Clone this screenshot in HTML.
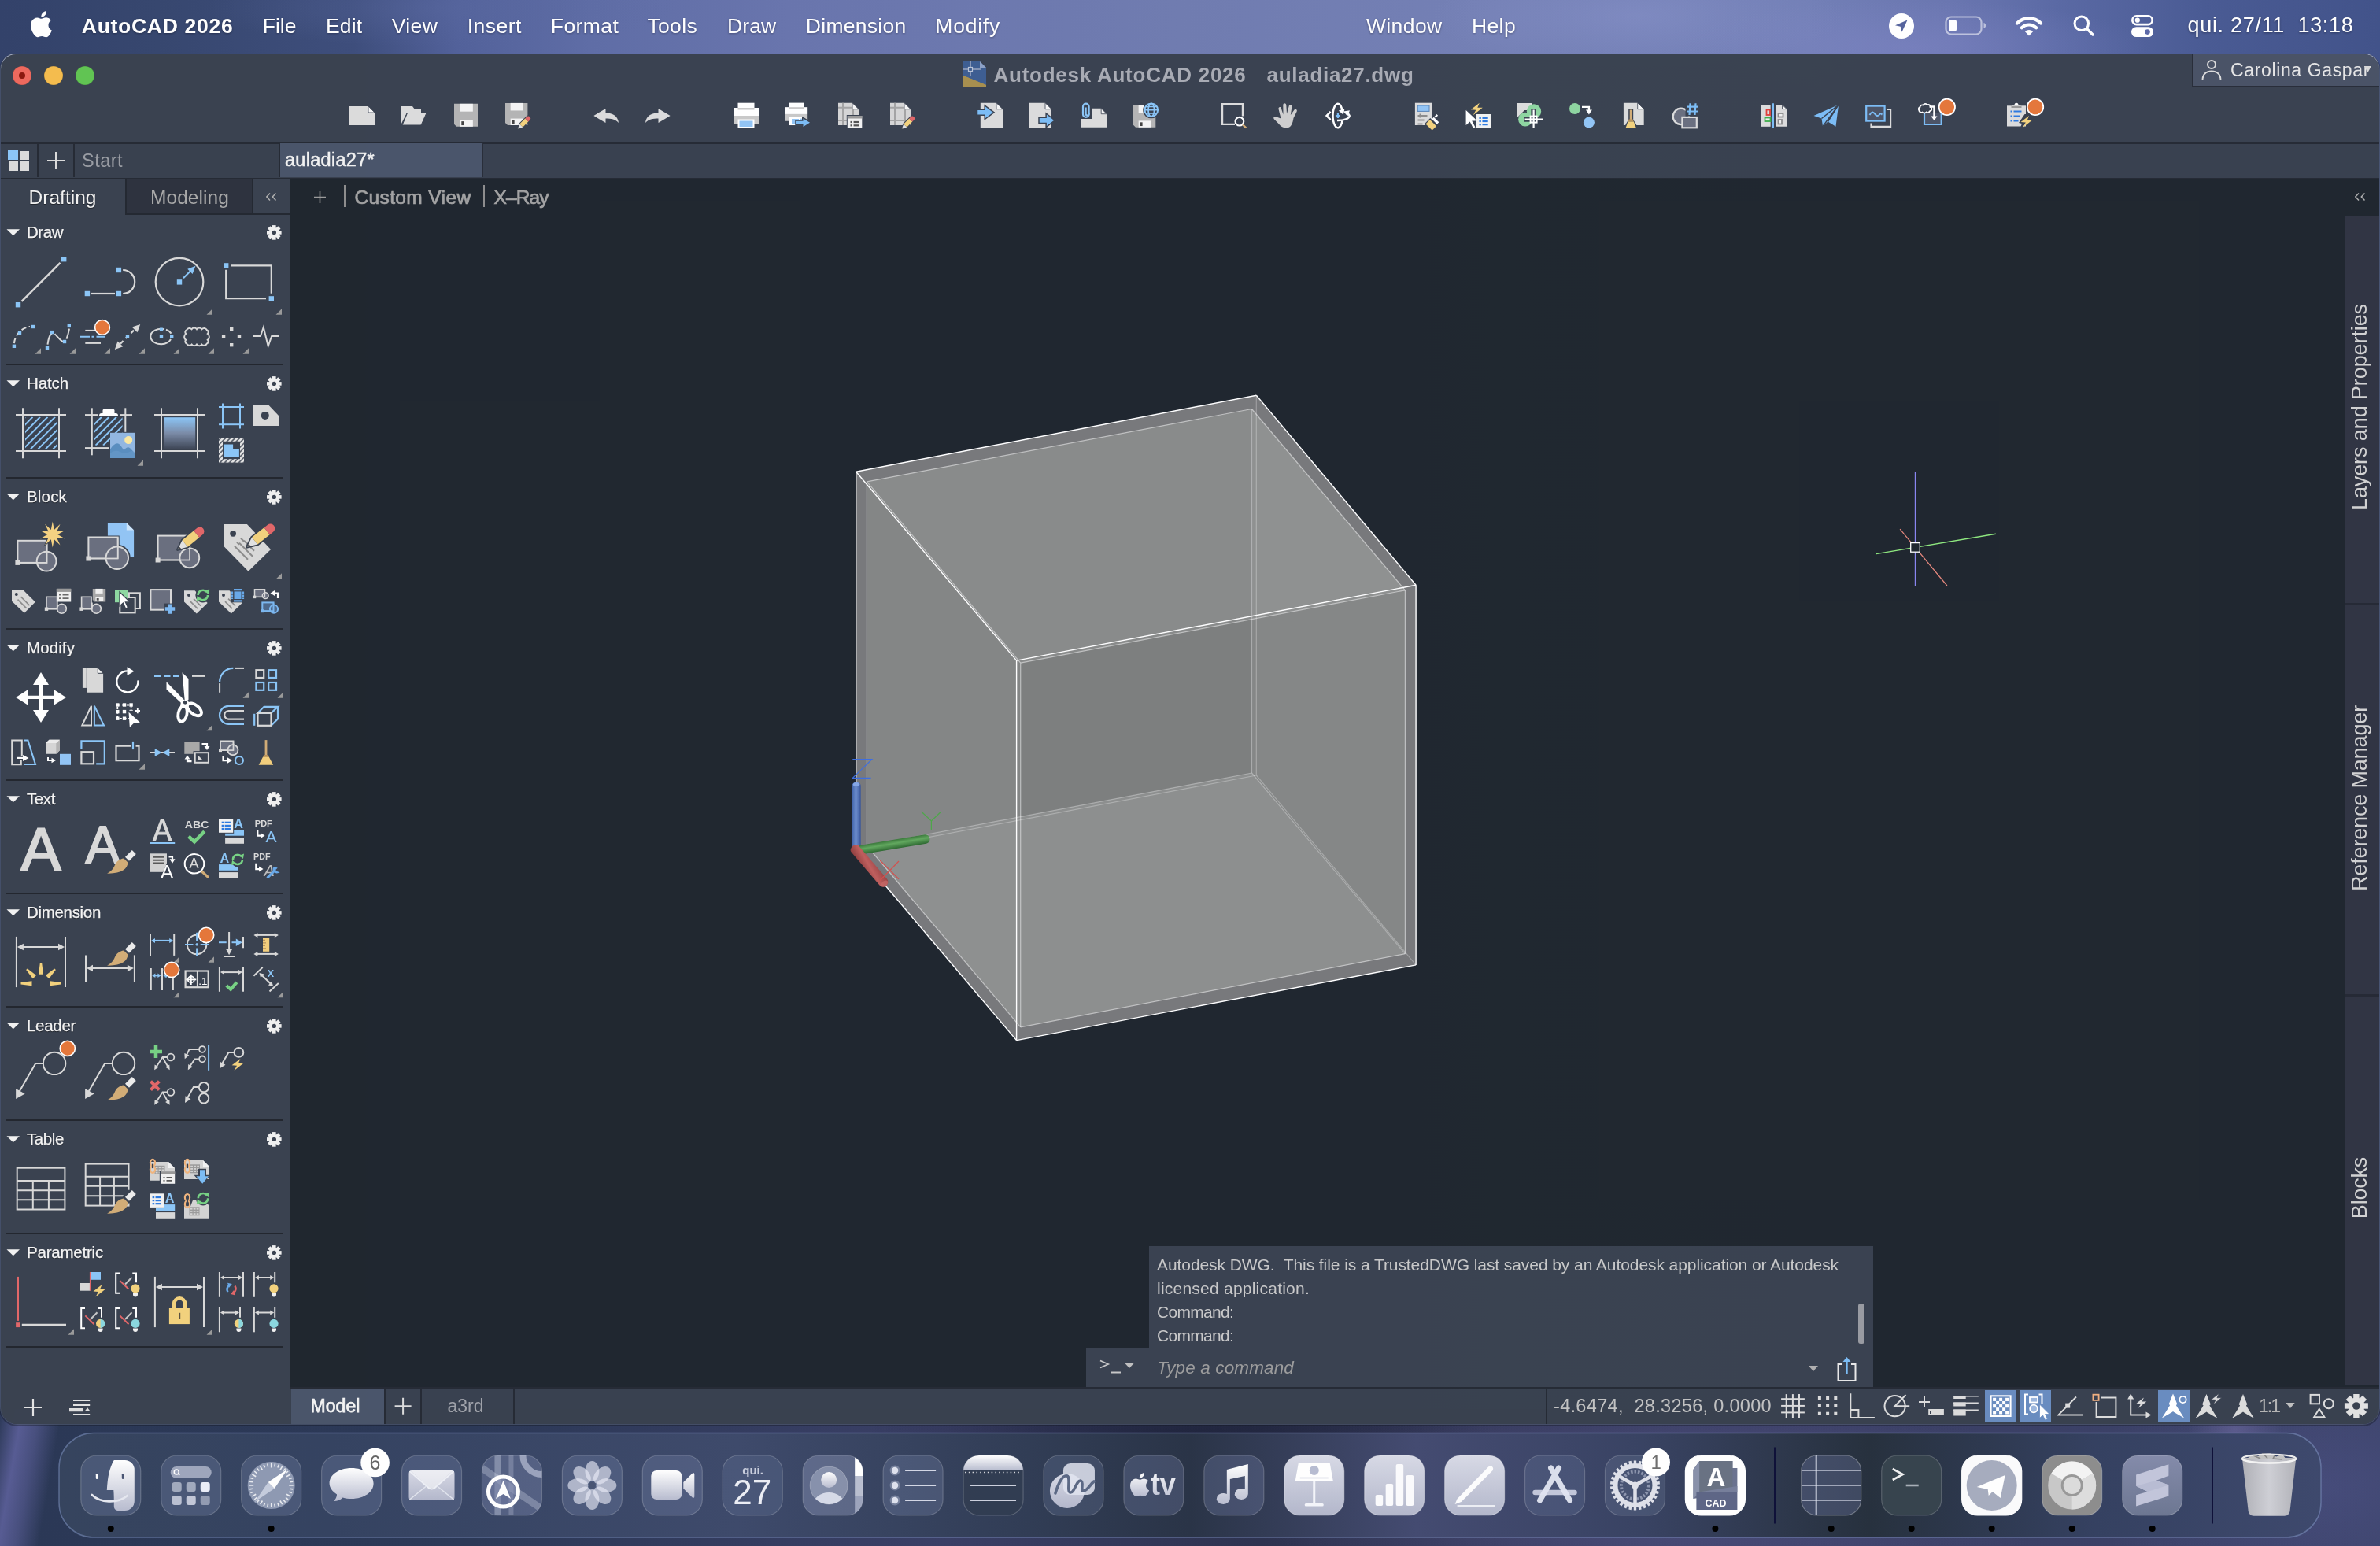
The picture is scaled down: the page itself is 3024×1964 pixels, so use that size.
<!DOCTYPE html>
<html><head><meta charset="utf-8"><title>AutoCAD 2026</title>
<style>
*{box-sizing:border-box;margin:0;padding:0}
html,body{width:3024px;height:1964px;overflow:hidden;background:#30385a;font-family:"Liberation Sans",sans-serif;}
.abs{position:absolute}
#wall{position:absolute;left:0;top:0;width:3024px;height:1964px;
 background:
  radial-gradient(ellipse 260px 70px at 2080px 20px, rgba(140,150,205,.45), rgba(140,150,205,0) 100%),
  radial-gradient(ellipse 300px 60px at 2430px 60px, rgba(130,135,200,.45), rgba(130,135,200,0) 100%),
  radial-gradient(ellipse 300px 50px at 560px 10px, rgba(90,105,160,.45), rgba(90,105,160,0) 100%),
  linear-gradient(90deg,#33426a 0px,#37476f 200px,#3e4e7c 450px,#52619a 580px,#5f6da6 750px,#6975ad 1000px,#707cb0 1500px,#7480b5 1900px,#727fb6 2300px,#6a76b0 2480px,#5a69a4 2620px,#4a5b94 2800px,#42538a 3024px);
}
#wallb{position:absolute;left:0;top:1790px;width:3024px;height:174px;
 background:
  linear-gradient(100deg, rgba(95,98,158,0) 0px, rgba(95,98,158,.85) 28px, rgba(95,98,158,.55) 50px, rgba(95,98,158,0) 78px),
  radial-gradient(ellipse 400px 120px at 1500px 40px, rgba(20,25,45,.6), rgba(20,25,45,0) 100%),
  radial-gradient(ellipse 500px 160px at 2100px 120px, rgba(95,95,150,.5), rgba(95,95,150,0) 100%),
  radial-gradient(ellipse 60px 40px at 2840px 26px, rgba(110,105,160,.6), rgba(110,105,160,0) 100%),
  radial-gradient(ellipse 300px 160px at 2950px 100px, rgba(80,85,140,.5), rgba(80,85,140,0) 100%),
  linear-gradient(90deg,#2b3856 0,#2c3957 600px,#3a3f66 1200px,#2e3350 1600px,#3a3e64 2200px,#3c4369 3024px);}
#win{position:absolute;left:1px;top:69px;width:3022px;height:1740px;background:#3b4351;border-radius:19px 19px 21px 21px;overflow:hidden;box-shadow:0 -1px 0 0 rgba(190,196,215,.85), 0 0 0 1px rgba(95,105,130,.55), 0 1px 0 2px rgba(20,24,34,.4);}
#root{position:absolute;left:0;top:0;width:3024px;height:1964px;will-change:transform;opacity:.9999}
.t{position:absolute;white-space:nowrap;line-height:1;}
svg{position:absolute;overflow:visible}
</style></head><body>
<div id="wall"></div><div id="wallb"></div>
<div id="root"><svg style="left:39px;top:14px;" width="27" height="33" viewBox="0 0 27 33"><path fill="#fff" d="M18.3 5.3c1.1-1.4 1.9-3.3 1.7-5.3-1.7.1-3.7 1.1-4.9 2.5-1.1 1.200-2 3.200-1.800 5.100 1.900.1 3.800-.9 5-2.300zM20 8.300c-2.700-.2-5 1.500-6.300 1.500s-3.300-1.400-5.400-1.400C5.500 8.500 2.900 10.100 1.500 12.600c-2.900 5-.7 12.400 2.100 16.500 1.400 2 3 4.200 5.200 4.100 2.100-.1 2.900-1.300 5.400-1.300s3.200 1.300 5.400 1.300c2.200 0 3.700-2 5-4 1.600-2.300 2.200-4.500 2.300-4.600-.1 0-4.400-1.700-4.400-6.600 0-4.100 3.400-6.100 3.500-6.200-1.900-2.800-4.900-3.400-6-3.500z"/></svg><span class="t" style="left:103.8px;top:19.7px;font-size:26.5px;color:#fff;font-weight:bold;letter-spacing:0.71px;text-shadow:0 1px 3px rgba(0,0,20,.35);">AutoCAD 2026</span><span class="t" style="left:333.8px;top:19.7px;font-size:26.5px;color:#fff;letter-spacing:-0.001px;text-shadow:0 1px 3px rgba(0,0,20,.35);">File</span><span class="t" style="left:413.9px;top:19.7px;font-size:26.5px;color:#fff;letter-spacing:0.182px;text-shadow:0 1px 3px rgba(0,0,20,.35);">Edit</span><span class="t" style="left:497.7px;top:19.7px;font-size:26.5px;color:#fff;letter-spacing:0.408px;text-shadow:0 1px 3px rgba(0,0,20,.35);">View</span><span class="t" style="left:593.7px;top:19.7px;font-size:26.5px;color:#fff;letter-spacing:0.503px;text-shadow:0 1px 3px rgba(0,0,20,.35);">Insert</span><span class="t" style="left:699.8px;top:19.7px;font-size:26.5px;color:#fff;letter-spacing:0.427px;text-shadow:0 1px 3px rgba(0,0,20,.35);">Format</span><span class="t" style="left:822.4px;top:19.7px;font-size:26.5px;color:#fff;letter-spacing:0.345px;text-shadow:0 1px 3px rgba(0,0,20,.35);">Tools</span><span class="t" style="left:924.0px;top:19.7px;font-size:26.5px;color:#fff;letter-spacing:0.139px;text-shadow:0 1px 3px rgba(0,0,20,.35);">Draw</span><span class="t" style="left:1023.8px;top:19.7px;font-size:26.5px;color:#fff;letter-spacing:0.289px;text-shadow:0 1px 3px rgba(0,0,20,.35);">Dimension</span><span class="t" style="left:1188.3px;top:19.7px;font-size:26.5px;color:#fff;letter-spacing:0.773px;text-shadow:0 1px 3px rgba(0,0,20,.35);">Modify</span><span class="t" style="left:1735.9px;top:19.7px;font-size:26.5px;color:#fff;letter-spacing:0.406px;text-shadow:0 1px 3px rgba(0,0,20,.35);">Window</span><span class="t" style="left:1870.0px;top:19.7px;font-size:26.5px;color:#fff;letter-spacing:0.371px;text-shadow:0 1px 3px rgba(0,0,20,.35);">Help</span><span class="t" style="left:2779.5px;top:19.0px;font-size:27px;color:#fff;letter-spacing:0.696px;text-shadow:0 1px 3px rgba(0,0,20,.35);white-space:pre;">qui. 27/11  13:18</span><svg style="left:2399.8px;top:17px;" width="32" height="32" viewBox="0 0 32 32"><circle cx="16" cy="16" r="16" fill="#fff"/><path d="M23.5 8.500 8 15.200l6.700 1.600 1.800 7z" fill="#56649d"/></svg><svg style="left:2471px;top:20px;" width="54" height="26" viewBox="0 0 54 26"><rect x="1.500" y="1.500" width="45" height="22" rx="6.500" fill="none" stroke="rgba(255,255,255,.55)" stroke-width="2.200"/><rect x="5" y="5" width="10" height="15" rx="3" fill="#fff"/><path d="M49.500 9v7c1.800-.6 2.700-2 2.700-3.500S51.300 9.600 49.500 9z" fill="rgba(255,255,255,.55)"/></svg><svg style="left:2560px;top:19px;" width="36" height="27" viewBox="0 0 36 27"><g fill="none" stroke="#fff" stroke-width="4.200" stroke-linecap="round"><path d="M3 10.500a21 21 0 0 1 30 0"/><path d="M8.800 16.300a13 13 0 0 1 18.400 0"/></g><path d="M18 26.500l-5.200-5.400a7.300 7.300 0 0 1 10.400 0z" fill="#fff"/></svg><svg style="left:2634px;top:19px;" width="28" height="27" viewBox="0 0 28 27"><circle cx="10.800" cy="10.800" r="8.800" fill="none" stroke="#fff" stroke-width="3"/><path d="M17.300 17.300 25 25" stroke="#fff" stroke-width="3.400" stroke-linecap="round"/></svg><svg style="left:2708px;top:19px;" width="28" height="28" viewBox="0 0 28 28"><rect x="1.300" y="1.300" width="25.400" height="10.800" rx="5.400" fill="none" stroke="#fff" stroke-width="2.600"/><circle cx="7.800" cy="6.700" r="3.100" fill="#fff"/><rect x="0" y="15.200" width="28" height="12.800" rx="6.400" fill="#fff"/><circle cx="20.500" cy="21.600" r="3.300" fill="#5c69a8"/></svg><div id="win"></div><div class="abs" id="winc" style="left:1px;top:69px;width:3022px;height:1740px;border-radius:19px 19px 21px 21px;overflow:hidden"><div class="abs" style="left:-1px;top:-69px;width:3024px;height:1964px"><div class="abs" style="left:16px;top:84px;width:24px;height:24px;border-radius:12px;background:#ee6a5f;box-shadow:inset 0 0 0 .5px rgba(0,0,0,.18)"></div><div class="abs" style="left:24px;top:92px;width:8px;height:8px;border-radius:4px;background:#8c1a10"></div><div class="abs" style="left:56px;top:84px;width:24px;height:24px;border-radius:12px;background:#f5bd4f;box-shadow:inset 0 0 0 .5px rgba(0,0,0,.18)"></div><div class="abs" style="left:96px;top:84px;width:24px;height:24px;border-radius:12px;background:#62c554;box-shadow:inset 0 0 0 .5px rgba(0,0,0,.18)"></div><svg style="left:1224px;top:78px;" width="29" height="33" viewBox="0 0 29 33"><path d="M0 0h21l8 8v25H0z" fill="#3f5f92"/><path d="M21 0l8 8h-8z" fill="#8ea2c6"/><path d="M0 18l29 12v3H0z" fill="#a8904f"/><path d="M0 18l29 12V33H0z" fill="#a8904f"/><path d="M0 10h22M9 0v18" stroke="#9aa6c0" stroke-width="1.600" fill="none"/><rect x="6.500" y="7.500" width="5" height="5" fill="#3f5f92" stroke="#b9c3d6" stroke-width="1.200"/></svg><span class="t" style="left:1262.5px;top:81.5px;font-size:26px;color:#a9acb4;font-weight:bold;letter-spacing:0.747px;">Autodesk AutoCAD 2026</span><span class="t" style="left:1609.5px;top:81.5px;font-size:26px;color:#a9acb4;font-weight:bold;letter-spacing:0.713px;">auladia27.dwg</span><div class="abs" style="left:2785px;top:68px;width:240px;height:43px;background:#4b5467;border-left:2px solid #2a2f3a;border-bottom:2px solid #2a2f3a;"></div><svg style="left:2797px;top:75px;" width="26" height="28" viewBox="0 0 26 28"><circle cx="13" cy="7" r="5" fill="none" stroke="#dcdcdc" stroke-width="2"/><path d="M1.500 27c0-8 5-11.500 11.500-11.500S24.500 19 24.500 27" fill="none" stroke="#dcdcdc" stroke-width="2"/></svg><span class="t" style="left:2834.0px;top:78.4px;font-size:23px;color:#e6e6e6;letter-spacing:0.635px;">Carolina Gaspar</span><svg style="left:3004px;top:84px;" width="9" height="8" viewBox="0 0 9 8"><path d="M0 0h9L4.500 8z" fill="#d8d8d8"/></svg><svg style="left:0;top:0" width="3024" height="230" viewBox="0 0 3024 230"><g transform="translate(444 130)"><path d="M0 5H24L32 13V29H0z" fill="#dcdcdc" stroke="none" stroke-width="2" /><path d="M24 5V13H32z" fill="#f6f6f6" stroke="#3b4351" stroke-width="0.8" /></g><g transform="translate(510 130)"><path d="M0 5H14L17 9H25V13H7L0 27z" fill="#dcdcdc" stroke="none" stroke-width="2" /><path d="M1 29 7.500 13.500H32L25 29z" fill="#dcdcdc" stroke="#3b4351" stroke-width="1" /></g><g transform="translate(576 130)"><g transform="translate(1 1.8)"><path d="M0 0H30V29H3L0 26z" fill="#b5b5b5" stroke="none" stroke-width="2" /><rect x="7.05" y="0" width="16.8" height="9.860000000000001" fill="#f4f4f4" stroke="none" stroke-width="2" rx="0" /><rect x="7.05" y="20.299999999999997" width="16.8" height="8.7" fill="#f4f4f4" stroke="none" stroke-width="2" rx="0" /><rect x="9.3" y="22.330000000000002" width="3.0" height="4.930000000000001" fill="#444" stroke="none" stroke-width="2" rx="0" /></g></g><g transform="translate(642 130)"><g transform="translate(0 0.9)"><path d="M0 0H28.4V28.1H3L0 25.1z" fill="#b5b5b5" stroke="none" stroke-width="2" /><rect x="6.6739999999999995" y="0" width="15.904" height="9.554000000000002" fill="#f4f4f4" stroke="none" stroke-width="2" rx="0" /><rect x="6.6739999999999995" y="19.669999999999998" width="15.904" height="8.43" fill="#f4f4f4" stroke="none" stroke-width="2" rx="0" /><rect x="8.804" y="21.637" width="2.84" height="4.777000000000001" fill="#444" stroke="none" stroke-width="2" rx="0" /></g><g transform="translate(15.8 15.2) scale(0.52) rotate(0 0 36)"><path d="M0 36L4.600 23.630L21.920 6.300A5.500 5.500 0 0 1 29.700 14.080L12.370 31.400z" fill="#3b4351" stroke="#3b4351" stroke-width="3.4" stroke-linejoin="round"/><path d="M0 36L12.370 31.400L4.600 23.630z" fill="#e2e2e2" stroke="none" stroke-width="2" /><path d="M0 36L4.200 34.440L1.560 31.800z" fill="#4a4a4a" stroke="none" stroke-width="2" /><path d="M12.370 31.400L25.810 17.970L18.030 10.190L4.600 23.630z" fill="#f3d27e" stroke="none" stroke-width="2" /><path d="M25.810 17.970L29.700 14.080A5.500 5.500 0 0 0 21.920 6.300L18.030 10.190z" fill="#e2686a" stroke="none" stroke-width="2" /></g></g><g transform="translate(754 130)"><path d="M0.400 17 15.500 8V13.500C25 13.500 31 17.500 32 26 28 21.500 22.500 20.500 15.500 20.500V26z" fill="#dcdcdc" stroke="none" stroke-width="2" /></g><g transform="translate(820 130)"><g transform="translate(32 0) scale(-1 1)"><path d="M0.400 17 15.500 8V13.500C25 13.500 31 17.500 32 26 28 21.500 22.500 20.500 15.500 20.500V26z" fill="#dcdcdc" stroke="none" stroke-width="2" /></g></g><g transform="translate(932 130)"><g transform="scale(1)"><rect x="5.5" y="0.7" width="21" height="10" fill="#fff" stroke="none" stroke-width="2" rx="0" /><rect x="0" y="7" width="32" height="10" fill="#fff" stroke="none" stroke-width="2" rx="0" /><rect x="0" y="17" width="32" height="10" fill="#c9c9c9" stroke="none" stroke-width="2" rx="0" /><rect x="5.5" y="21.5" width="21" height="11.5" fill="#fff" stroke="none" stroke-width="2" rx="0" /><rect x="7.5" y="23.5" width="17" height="7.5" fill="#93c5f5" stroke="none" stroke-width="2" rx="0" /><rect x="5.5" y="7" width="21" height="2.5" fill="#c9c9c9" stroke="none" stroke-width="2" rx="0" /></g></g><g transform="translate(998 130)"><g transform="scale(0.88)"><rect x="5.5" y="0.7" width="21" height="10" fill="#fff" stroke="none" stroke-width="2" rx="0" /><rect x="0" y="7" width="32" height="10" fill="#fff" stroke="none" stroke-width="2" rx="0" /><rect x="0" y="17" width="32" height="10" fill="#c9c9c9" stroke="none" stroke-width="2" rx="0" /><rect x="5.5" y="21.5" width="21" height="11.5" fill="#fff" stroke="none" stroke-width="2" rx="0" /><rect x="7.5" y="23.5" width="17" height="7.5" fill="#93c5f5" stroke="none" stroke-width="2" rx="0" /><rect x="5.5" y="7" width="21" height="2.5" fill="#c9c9c9" stroke="none" stroke-width="2" rx="0" /></g><rect x="6" y="19" width="13" height="9" fill="#fff" stroke="none" stroke-width="2" rx="0" /><rect x="8" y="21" width="9" height="7" fill="#93c5f5" stroke="none" stroke-width="2" rx="0" /><path d="M13 23.05H21.775V19L32.5 25.75L21.775 32.5V28.45H13z" fill="#7dbdf5" stroke="#3b4351" stroke-width="1.5" /></g><g transform="translate(1064 130)"><path d="M1 0.7H19L27 8.7V29.0H1z" fill="#d6d6d6" stroke="none" stroke-width="2" /><path d="M19 0.7V8.7H27z" fill="#f6f6f6" stroke="#3b4351" stroke-width="0.8" /><path d="M7 0.7V29.0M20 8.7V29.0M1 6.7H19M1 23.0H27" fill="none" stroke="#a5a5a5" stroke-width="2" /><rect x="11.8" y="16" width="20.5" height="18" fill="#3b4351" stroke="none" stroke-width="2" rx="0" /><rect x="12.8" y="17" width="18.5" height="16" fill="#f2f2f2" stroke="none" stroke-width="2" rx="0" /><rect x="12.8" y="17" width="18.5" height="3.52" fill="#9a9a9a" stroke="none" stroke-width="2" rx="0" /><rect x="16.5" y="23.9" width="2.4" height="2.2" fill="#555" stroke="none" stroke-width="2" rx="0" /><rect x="20.57" y="23.9" width="7.4" height="2.2" fill="#555" stroke="none" stroke-width="2" rx="0" /><rect x="16.5" y="28.22" width="2.4" height="2.2" fill="#555" stroke="none" stroke-width="2" rx="0" /><rect x="20.57" y="28.22" width="7.4" height="2.2" fill="#555" stroke="none" stroke-width="2" rx="0" /></g><g transform="translate(1130 130)"><path d="M1 0.7H19L27 8.7V29.0H1z" fill="#d6d6d6" stroke="none" stroke-width="2" /><path d="M19 0.7V8.7H27z" fill="#f6f6f6" stroke="#3b4351" stroke-width="0.8" /><path d="M7 0.7V29.0M20 8.7V29.0M1 6.7H19M1 23.0H27" fill="none" stroke="#a5a5a5" stroke-width="2" /><g transform="translate(15.8 15.2) scale(0.52) rotate(0 0 36)"><path d="M0 36L4.600 23.630L21.920 6.300A5.500 5.500 0 0 1 29.700 14.080L12.370 31.400z" fill="#3b4351" stroke="#3b4351" stroke-width="3.4" stroke-linejoin="round"/><path d="M0 36L12.370 31.400L4.600 23.630z" fill="#e2e2e2" stroke="none" stroke-width="2" /><path d="M0 36L4.200 34.440L1.560 31.800z" fill="#4a4a4a" stroke="none" stroke-width="2" /><path d="M12.370 31.400L25.810 17.970L18.030 10.190L4.600 23.630z" fill="#f3d27e" stroke="none" stroke-width="2" /><path d="M25.810 17.970L29.700 14.080A5.500 5.500 0 0 0 21.920 6.300L18.030 10.190z" fill="#e2686a" stroke="none" stroke-width="2" /></g></g><g transform="translate(1242 130)"><path d="M3.8 0.7H24.0L32.0 8.7V33.0H3.8z" fill="#dcdcdc" stroke="none" stroke-width="2" /><path d="M24.0 0.7V8.7H32.0z" fill="#f6f6f6" stroke="#3b4351" stroke-width="0.8" /><path d="M-0.5 9.280000000000001H9.175V4L21.0 12.8L9.175 21.6V16.32H-0.5z" fill="#7dbdf5" stroke="#3b4351" stroke-width="1.5" /></g><g transform="translate(1308 130)"><path d="M-0.3 0.7H20.0L28.0 8.7V33.0H-0.3z" fill="#dcdcdc" stroke="none" stroke-width="2" /><path d="M20.0 0.7V8.7H28.0z" fill="#f6f6f6" stroke="#3b4351" stroke-width="0.8" /><path d="M12 19.31H21.134999999999998V14L32.3 22.85L21.134999999999998 31.7V26.39H12z" fill="#7dbdf5" stroke="#3b4351" stroke-width="1.5" /></g><g transform="translate(1374 130)"><path d="M0 7.7H25.200000000000003L32.2 14.7V31.7H0z" fill="#dcdcdc" stroke="none" stroke-width="2" /><path d="M25.200000000000003 7.7V14.7H32.2z" fill="#f6f6f6" stroke="#3b4351" stroke-width="0.8" /><path d="M-1 6H13V21H-1z" fill="#3b4351" stroke="none" stroke-width="2" /><path d="M2 13V5.500a3.800 3.800 0 0 1 7.600 0V14.500a2 2 0 0 1-4 0V6.500" fill="none" stroke="#8cc6f7" stroke-width="2.2" /><path d="M2 13v2a4 4 0 0 0 8 0" fill="none" stroke="#8cc6f7" stroke-width="2.2" opacity="0"/><path d="M2 12.500V15a3.800 3.800 0 0 0 7.600 0V13" fill="none" stroke="#8cc6f7" stroke-width="2.2" /></g><g transform="translate(1440 130)"><g transform="translate(0 4)"><path d="M0 0H28.3V27.7H3L0 24.7z" fill="#b5b5b5" stroke="none" stroke-width="2" /><rect x="6.6505" y="0" width="15.848000000000003" height="9.418000000000001" fill="#f4f4f4" stroke="none" stroke-width="2" rx="0" /><rect x="6.6505" y="19.389999999999997" width="15.848000000000003" height="8.309999999999999" fill="#f4f4f4" stroke="none" stroke-width="2" rx="0" /><rect x="8.773" y="21.329" width="2.83" height="4.7090000000000005" fill="#444" stroke="none" stroke-width="2" rx="0" /></g><circle cx="22.8" cy="9.7" r="10.6" fill="#3b4351" stroke="none" stroke-width="2" /><circle cx="22.8" cy="9.7" r="8.3" fill="none" stroke="#8cc6f7" stroke-width="2" /><ellipse cx="22.8" cy="9.7" rx="3.8" ry="8.3" fill="none" stroke="#8cc6f7" stroke-width="1.8" /><path d="M14.500 9.700h16.600M16 5.500h13.600M16 14h13.600" fill="none" stroke="#8cc6f7" stroke-width="1.6" /></g><g transform="translate(1552 130)"><path d="M17 27.800H1.100V2.100H26.900V17.500" fill="none" stroke="#dcdcdc" stroke-width="2.2" /><circle cx="22.9" cy="24.2" r="5.3" fill="#3b4351" stroke="#fff" stroke-width="2.2" /><path d="M27 28.3L31.3 32.3" stroke="#d2ad78" stroke-width="2.4" fill="none" /></g><g transform="translate(1618 130)"><path d="M9.500 20.500 6.500 8.500C6 6 9 5 9.800 7.500L12.500 15.500 12.300 3.500C12.300 0.500 16 0.500 16.300 3.500L17 14.500 19.800 4.500C20.500 2 24 3 23.500 5.500L21.800 16 26.500 9.500C28 7.500 31 9.500 29.500 12L25.500 20C24.500 26 23 32.500 16 32.500 12 32.500 9 30 6.500 27L1 21.500C-1 19 1.500 17 4 18.500z" fill="#cfcfcf" stroke="none" stroke-width="2" /></g><g transform="translate(1684 130)"><path d="M21.500 10.500A6.300 15.200 0 1 0 21.500 23.500" fill="none" stroke="#fff" stroke-width="2.5" /><path transform="translate(22.8 15.8) rotate(72)" d="M0 0L-7 -4.0L-7 4.0z" fill="#fff"/><path d="M15 23A15 6 0 0 0 30.700 17A15 6 0 0 0 27.500 13.800" fill="none" stroke="#fff" stroke-width="2.5" /><path transform="translate(23 11.6) rotate(200)" d="M0 0L-7 -4.0L-7 4.0z" fill="#fff"/><path d="M6.600 11.900 1.600 17 6.600 22.100" fill="none" stroke="#fff" stroke-width="2.5" /><path d="M15.900 14v6M12.900 17h6" fill="none" stroke="#7dbdf5" stroke-width="2.2" /></g><g transform="translate(1797 130)"><rect x="0.9" y="0.7" width="21.8" height="28.3" fill="#dcdcdc" stroke="none" stroke-width="2" rx="0" /><rect x="4.2" y="4" width="14.8" height="7.4" fill="#93c5f5" stroke="#5b86b8" stroke-width="1" rx="0" /><path d="M4.500 17h12M4.500 22.500h8M4.500 27.500h6" fill="none" stroke="#8d8d8d" stroke-width="2" /><path d="M7.500 14.500v5" fill="none" stroke="#8d8d8d" stroke-width="2" /><g transform="translate(14.500 22.500) scale(.82)"><path d="M-2 6 7 -3 19 9 10 18z" fill="#3b4351" stroke="none" stroke-width="2" /><path d="M0 6 6.500 -0.500 16.500 9.500 10 16z" fill="#f3d27e" stroke="none" stroke-width="2" /><path d="M9.500 -1.500 12.500 -4.500 20.500 3.500 17.500 6.500z" fill="#fff" stroke="none" stroke-width="2" /><path d="M13.500 -5.500 17 -9 19 -7 15.500 -3.500z" fill="#fff" stroke="none" stroke-width="2" /></g></g><g transform="translate(1862 130)"><g transform="translate(6.8 0.7) scale(1)"><path d="M11 0 0 8.500 6.500 9 3 15.500 15 6 8.500 6z" fill="#f3d27e" stroke="none" stroke-width="2" /></g><path d="M0 8.600V30.500L5.500 25.500 9.500 33.500 13.200 31.700 9.200 24H16.500z" fill="#fff" stroke="#3b4351" stroke-width="1.2" /><rect x="12.8" y="14" width="20.2" height="20" fill="#3b4351" stroke="none" stroke-width="2" rx="0" /><rect x="13.8" y="15" width="18.2" height="18" fill="#f2f2f2" stroke="none" stroke-width="2" rx="0" /><rect x="17.44" y="18.759999999999998" width="2.4" height="2.2" fill="#2f7be0" stroke="none" stroke-width="2" rx="0" /><rect x="21.444" y="18.759999999999998" width="7.28" height="2.2" fill="#2f7be0" stroke="none" stroke-width="2" rx="0" /><rect x="17.44" y="22.9" width="2.4" height="2.2" fill="#2f7be0" stroke="none" stroke-width="2" rx="0" /><rect x="21.444" y="22.9" width="7.28" height="2.2" fill="#2f7be0" stroke="none" stroke-width="2" rx="0" /><rect x="17.44" y="27.04" width="2.4" height="2.2" fill="#2f7be0" stroke="none" stroke-width="2" rx="0" /><rect x="21.444" y="27.04" width="7.28" height="2.2" fill="#2f7be0" stroke="none" stroke-width="2" rx="0" /></g><g transform="translate(1928 130)"><path d="M0 1H18V10H9L0 19z" fill="#dcdcdc" stroke="none" stroke-width="2" /><circle cx="21" cy="11.4" r="9.2" fill="#8fd5a1" stroke="none" stroke-width="2" /><circle cx="10" cy="21.6" r="8.9" fill="#8fd5a1" stroke="none" stroke-width="2" /><path d="M20.600 8V33M8.500 21.600H33" fill="none" stroke="#3b4351" stroke-width="6.5" /><rect x="16.1" y="17.1" width="9" height="9" fill="#8fd5a1" stroke="#3b4351" stroke-width="0" rx="0" opacity="0"/><path d="M20.600 9.500V32.500M9.500 21.600H32.500" fill="none" stroke="#fff" stroke-width="2.2" /><rect x="16.6" y="17.6" width="8" height="8" fill="none" stroke="#fff" stroke-width="2" rx="0" /></g><g transform="translate(1994 130)"><circle cx="7" cy="8" r="7" fill="#8fd5a1" stroke="none" stroke-width="2" /><circle cx="24.9" cy="25.6" r="7" fill="#93c5f5" stroke="none" stroke-width="2" /><path d="M16 5.900H24.900V10.500" fill="none" stroke="#fff" stroke-width="2.4" /><path transform="translate(24.9 15.5) rotate(90)" d="M0 0L-6 -4.0L-6 4.0z" fill="#fff"/></g><g transform="translate(2060 130)"><path d="M2.9 0.7H20.7L28.7 8.7V29.0H2.9z" fill="#dcdcdc" stroke="none" stroke-width="2" /><path d="M20.7 0.7V8.7H28.7z" fill="#f6f6f6" stroke="#3b4351" stroke-width="0.8" /><path d="M9 12 14 8H16L21 12V31H9z" fill="#3b4351" stroke="none" stroke-width="2" opacity="0"/><rect x="10.7" y="8.5" width="3" height="14" fill="#d2ad78" stroke="#3b4351" stroke-width="0" rx="0" /><path d="M9.200 9H15.200V22L19 28 20 33H4.500L5.500 28 9.200 22z" fill="#3b4351" stroke="none" stroke-width="2" /><rect x="10.7" y="9.5" width="3" height="13" fill="#d2ad78" stroke="none" stroke-width="2" rx="0" /><path d="M9.500 21.500h5.400l.8 3H8.700z" fill="#b8935e" stroke="none" stroke-width="2" /><path d="M8.500 24.500h7.400L19 32.800H5.500z" fill="#f3d27e" stroke="none" stroke-width="2" /></g><g transform="translate(2126 130)"><circle cx="9.9" cy="17.9" r="10.2" fill="#6b7080" stroke="#dcdcdc" stroke-width="2.2" /><rect x="11.4" y="18.9" width="18.4" height="13.4" fill="#6b7080" stroke="#dcdcdc" stroke-width="2.2" rx="0" /><path d="M9.900 7.700A10.200 10.200 0 0 1 20.100 17.900" fill="none" stroke="#dcdcdc" stroke-width="2.2" opacity="0"/><rect x="15.5" y="-1" width="18" height="18.5" fill="#3b4351" stroke="none" stroke-width="2" rx="0" /><path d="M21.500 1.200 20.500 16M28.500 1.200 27.500 16M18 5.700H32M17.500 11.500H31.500" fill="none" stroke="#7dbdf5" stroke-width="2.2" /></g><g transform="translate(2238 130)"><rect x="-0.1" y="3.1" width="11.7" height="27.7" fill="#dcdcdc" stroke="none" stroke-width="2" rx="0" /><path d="M18 3.1H26.5L32 8.6V30.8H18z" fill="#dcdcdc" stroke="none" stroke-width="2" /><path d="M26.5 3.1V8.6H32z" fill="#f6f6f6" stroke="#3b4351" stroke-width="0.8" /><path d="M14.9 1.3L14.9 32.7" stroke="#7dbdf5" stroke-width="2.2" fill="none" /><rect x="6.5" y="9.5" width="4.5" height="6.5" fill="none" stroke="#e0413c" stroke-width="1.8" rx="0" /><rect x="4.5" y="19.5" width="7" height="4.5" fill="#f0f0f0" stroke="#3fae4c" stroke-width="1.8" rx="0" /><rect x="21.5" y="14" width="6" height="4.5" fill="#f0f0f0" stroke="#8d8d8d" stroke-width="1.8" rx="0" /><rect x="21.5" y="22" width="4.5" height="5.5" fill="#f0f0f0" stroke="#8d8d8d" stroke-width="1.8" rx="0" /></g><g transform="translate(2304 130)"><path d="M0.500 17 32.100 3.100 28.500 30.800 18.500 24.500 12 30.500 10.500 20.500z" fill="#7dbdf5" stroke="none" stroke-width="2" /><path d="M10.500 20.500 32.100 3.100 12 30.500M18.500 24.500 32.100 3.100" fill="none" stroke="#3b4351" stroke-width="1.4" stroke-linejoin="round"/></g><g transform="translate(2370 130)"><path d="M7.500 26.500V30.800H32.100V9H27.500" fill="none" stroke="#dcdcdc" stroke-width="2.2" /><rect x="1.2" y="4.6" width="23.4" height="19" fill="#4d5567" stroke="#7dbdf5" stroke-width="2.2" rx="0" /><path d="M5.500 16C8 11.500 10 11.500 12 14.500S16 18 18 15.500 20.500 15 21.500 15.500" fill="none" stroke="#7dbdf5" stroke-width="2" /></g><g transform="translate(2436 130)"><path d="M9 13.500V28H30.700V13.500" fill="#4d5567" stroke="#7dbdf5" stroke-width="2.2" /><path d="M3.500 6a3 3 0 0 1 4-2.500a3.300 3.300 0 0 1 5.500-.3a3 3 0 0 1 4 2.800a2.800 2.800 0 0 1-1 5.200a3 3 0 0 1-4.500 1.300a3.300 3.300 0 0 1-5 0a3 3 0 0 1-4.300-2.500a2.700 2.700 0 0 1 1.300-4z" fill="#3b4351" stroke="#fff" stroke-width="1.8" /><path d="M15.500 5.500H21.500V18" fill="none" stroke="#fff" stroke-width="2.4" /><path transform="translate(21.5 23) rotate(90)" d="M0 0L-5.5 -4.0L-5.5 4.0z" fill="#fff"/><circle cx="37.8" cy="5.9" r="10.2" fill="#e5783c" stroke="#fff" stroke-width="1.8" /></g><g transform="translate(2550 130)"><rect x="0" y="4.3" width="24" height="26.2" fill="#dcdcdc" stroke="none" stroke-width="2" rx="0" /><path d="M6.500 5.500V3.300H9.500a2.500 2.500 0 0 1 5 0H17.500V5.500z" fill="#fff" stroke="none" stroke-width="2" /><rect x="5.5" y="4.5" width="13" height="2.5" fill="#9a9a9a" stroke="none" stroke-width="2" rx="0" /><path d="M4.500 11.500h2M8.500 11.500h10M4.500 17.500h2M8.500 17.500h8M4.500 23.500h2M8.500 23.500h6" fill="none" stroke="#2f7be0" stroke-width="2" /><path d="M22.500 15 15 26 19 27 16 34.500 32 20 24 20 27 15z" fill="#3b4351" stroke="none" stroke-width="2" /><g transform="translate(17.6 17) scale(0.95)"><path d="M11 0 0 8.500 6.500 9 3 15.500 15 6 8.500 6z" fill="#f3d27e" stroke="none" stroke-width="2" /></g><circle cx="36" cy="5.9" r="10.2" fill="#e5783c" stroke="#fff" stroke-width="1.8" /></g></svg><div class="abs" style="left:0px;top:180.5px;width:3024px;height:47px;background:#3a4250;border-top:2px solid #272c36;border-bottom:2px solid #272c36;"></div><div class="abs" style="left:47px;top:182px;width:2px;height:43px;background:#272c36;"></div><div class="abs" style="left:93px;top:182px;width:2px;height:43px;background:#272c36;"></div><div class="abs" style="left:354px;top:182px;width:2px;height:43px;background:#272c36;"></div><div class="abs" style="left:356px;top:182px;width:256px;height:43px;background:#4b566b;"></div><div class="abs" style="left:612px;top:182px;width:2px;height:43px;background:#2a2f3a;"></div><svg style="left:10px;top:190px;" width="28" height="28" viewBox="0 0 28 28"><rect x="0" y="0" width="13" height="13" fill="#8cc6f7" stroke="none" stroke-width="2" rx="0" /><rect x="15" y="2" width="12" height="11" fill="#dcdcdc" stroke="none" stroke-width="2" rx="0" /><rect x="2" y="15" width="11" height="12" fill="#dcdcdc" stroke="none" stroke-width="2" rx="0" /><rect x="15" y="15" width="12" height="12" fill="#dcdcdc" stroke="none" stroke-width="2" rx="0" /></svg><svg style="left:60px;top:193px;" width="22" height="22" viewBox="0 0 22 22"><path d="M11 0v22M0 11h22" stroke="#dcdcdc" stroke-width="2"/></svg><span class="t" style="left:104.0px;top:192.7px;font-size:23.5px;color:#9a9da4;letter-spacing:0.472px;">Start</span><span class="t" style="left:362.0px;top:192.2px;font-size:23.5px;color:#f2f2f2;letter-spacing:0.292px;-webkit-text-stroke:.55px #f2f2f2;">auladia27*</span><div class="abs" style="left:368px;top:227px;width:2656px;height:1537px;background:#212830;"></div><svg style="left:399px;top:243px;" width="15" height="15" viewBox="0 0 15 15"><path d="M7.500 0v15M0 7.500h15" stroke="#9c9c9c" stroke-width="1.600"/></svg><div class="abs" style="left:437px;top:235px;width:2px;height:28px;background:#8e8e8e;"></div><span class="t" style="left:450.5px;top:238.7px;font-size:24.5px;color:#a4a4a4;letter-spacing:0.374px;-webkit-text-stroke:.7px #a4a4a4;">Custom View</span><div class="abs" style="left:613.5px;top:235px;width:2px;height:28px;background:#8e8e8e;"></div><span class="t" style="left:627.5px;top:238.7px;font-size:24.5px;color:#a4a4a4;letter-spacing:-0.909px;-webkit-text-stroke:.7px #a4a4a4;">X–Ray</span><div class="abs" style="left:2979px;top:274px;width:45px;height:1485px;background:#323644;"></div><div class="abs" style="left:2979px;top:766px;width:45px;height:3px;background:#272b36;"></div><div class="abs" style="left:2979px;top:1263px;width:45px;height:3px;background:#272b36;"></div><svg style="left:2992px;top:244.5px;" width="14" height="10" viewBox="0 0 14 10"><path d="M5 0.500 0.800 5 5 9.500M12.500 0.500 8.300 5 12.500 9.500" fill="none" stroke="#b0b0b0" stroke-width="1.500"/></svg><div class="abs" style="left:2797.5px;top:497px;width:400px;height:40px;transform:rotate(-90deg);text-align:center;line-height:40px;font-size:27px;color:#d2d2d2;white-space:nowrap;letter-spacing:-0.1px">Layers and Properties</div><div class="abs" style="left:2797.5px;top:994.2px;width:400px;height:40px;transform:rotate(-90deg);text-align:center;line-height:40px;font-size:27px;color:#d2d2d2;white-space:nowrap;letter-spacing:-0.15px">Reference Manager</div><div class="abs" style="left:2797.5px;top:1489px;width:400px;height:40px;transform:rotate(-90deg);text-align:center;line-height:40px;font-size:27px;color:#d2d2d2;white-space:nowrap;letter-spacing:-0.2px">Blocks</div><svg style="left:0;top:0" width="3024" height="1964" viewBox="0 0 3024 1964"><polygon points="1087.7,599.3 1596.3,502.2 1799.1,743.3 1799.1,1225.9 1291.6,1321.6 1087.7,1081.0" fill="#797a7c"/><polygon points="1101.4,611.8 1590.5,519.5 1590.5,786.6 1296.7,842.2" fill="#8a8c8b"/><polygon points="1590.5,519.5 1785.4,749.8 1590.5,786.6" fill="#909291"/><polygon points="1101.4,611.8 1296.7,842.2 1296.7,1037.5 1101.4,1074.5" fill="#858786"/><polygon points="1101.4,1074.5 1296.7,1037.5 1296.7,1304.8" fill="#8f9190"/><polygon points="1296.7,842.2 1590.5,786.6 1590.5,982.0 1296.7,1037.5" fill="#7e807f"/><polygon points="1590.5,786.6 1785.4,749.8 1785.4,1211.7 1590.5,982.0" fill="#868887"/><polygon points="1296.7,1037.5 1590.5,982.0 1785.4,1211.7 1296.7,1304.8" fill="#8e908f"/><line x1="1596.3" y1="502.2" x2="1596.3" y2="985.0" stroke="rgba(255,255,255,.28)" stroke-width="1.2"/><line x1="1087.7" y1="1081.0" x2="1596.3" y2="985.0" stroke="rgba(255,255,255,.28)" stroke-width="1.2"/><line x1="1596.3" y1="985.0" x2="1799.1" y2="1225.9" stroke="rgba(255,255,255,.28)" stroke-width="1.2"/><line x1="1590.5" y1="519.5" x2="1590.5" y2="982.0" stroke="rgba(255,255,255,.33)" stroke-width="1.2"/><line x1="1101.4" y1="1074.5" x2="1590.5" y2="982.0" stroke="rgba(255,255,255,.33)" stroke-width="1.2"/><line x1="1590.5" y1="982.0" x2="1785.4" y2="1211.7" stroke="rgba(255,255,255,.33)" stroke-width="1.2"/><line x1="1101.4" y1="611.8" x2="1590.5" y2="519.5" stroke="rgba(255,255,255,.5)" stroke-width="1.2"/><line x1="1590.5" y1="519.5" x2="1785.4" y2="749.8" stroke="rgba(255,255,255,.5)" stroke-width="1.2"/><line x1="1785.4" y1="749.8" x2="1296.7" y2="842.2" stroke="rgba(255,255,255,.5)" stroke-width="1.2"/><line x1="1296.7" y1="842.2" x2="1101.4" y2="611.8" stroke="rgba(255,255,255,.5)" stroke-width="1.2"/><line x1="1101.4" y1="611.8" x2="1101.4" y2="1074.5" stroke="rgba(255,255,255,.5)" stroke-width="1.2"/><line x1="1101.4" y1="1074.5" x2="1296.7" y2="1304.8" stroke="rgba(255,255,255,.5)" stroke-width="1.2"/><line x1="1296.7" y1="1304.8" x2="1785.4" y2="1211.7" stroke="rgba(255,255,255,.5)" stroke-width="1.2"/><line x1="1785.4" y1="1211.7" x2="1785.4" y2="749.8" stroke="rgba(255,255,255,.5)" stroke-width="1.2"/><line x1="1296.7" y1="842.2" x2="1296.7" y2="1304.8" stroke="rgba(255,255,255,.5)" stroke-width="1.2"/><line x1="1087.7" y1="599.3" x2="1596.3" y2="502.2" stroke="#fff" stroke-width="1.4"/><line x1="1596.3" y1="502.2" x2="1799.1" y2="743.3" stroke="#fff" stroke-width="1.4"/><line x1="1799.1" y1="743.3" x2="1291.6" y2="839.1" stroke="#fff" stroke-width="1.4"/><line x1="1291.6" y1="839.1" x2="1087.7" y2="599.3" stroke="#fff" stroke-width="1.4"/><line x1="1087.7" y1="599.3" x2="1087.7" y2="1081.0" stroke="#fff" stroke-width="1.4"/><line x1="1087.7" y1="1081.0" x2="1291.6" y2="1321.6" stroke="#fff" stroke-width="1.4"/><line x1="1291.6" y1="1321.6" x2="1799.1" y2="1225.9" stroke="#fff" stroke-width="1.4"/><line x1="1799.1" y1="1225.9" x2="1799.1" y2="743.3" stroke="#fff" stroke-width="1.4"/><line x1="1291.6" y1="839.1" x2="1291.6" y2="1321.6" stroke="#fff" stroke-width="1.4"/><defs>
    <linearGradient id="gz" x1="0" x2="1" y1="0" y2="0"><stop offset="0" stop-color="#3f62a8"/><stop offset=".45" stop-color="#6f90cf"/><stop offset="1" stop-color="#39569a"/></linearGradient>
    <linearGradient id="gy" x1="0" x2="0" y1="0" y2="1" gradientUnits="objectBoundingBox"><stop offset="0" stop-color="#3c7a3c"/><stop offset=".4" stop-color="#63a95f"/><stop offset="1" stop-color="#2f6a32"/></linearGradient>
    <linearGradient id="gx" x1="0" x2="1" y1="1" y2="0"><stop offset="0" stop-color="#8c3d3d"/><stop offset=".5" stop-color="#c0605e"/><stop offset="1" stop-color="#9a4545"/></linearGradient></defs><path d="M1082.500 1081V998.500c0-3.500 3-5 5.600-5s5.600 1.500 5.600 5V1081z" fill="url(#gz)"/><ellipse cx="1088.100" cy="996.500" rx="4.200" ry="2.600" fill="#86a8e6"/><g transform="translate(1089,1080.500) rotate(-9.500)"><path d="M4 -5.800h84c3.800 0 5.600 2.800 5.600 5.800s-1.800 5.800-5.600 5.800H4z" fill="url(#gy)"/></g><g transform="translate(1088.500,1081) rotate(49.600)"><path d="M-3 -6.200h55c4 0 6 3 6 6.200s-2 6.200-6 6.200H-3c-3.500 0-5-3-5-6.200s1.500-6.200 5-6.200z" fill="url(#gx)"/><ellipse cx="54.500" cy="0" rx="3.200" ry="5" fill="#c96c69" opacity=".7"/></g><path d="M1083.300 964.600H1107.900L1083.300 988.400H1106.600" fill="none" stroke="#3f6fe0" stroke-width="1.200"/><path d="M1170.700 1031L1183.400 1043L1195 1031.800M1183.400 1043V1054.400" fill="none" stroke="#4fa84a" stroke-width="1.200"/><path d="M1118.200 1093.200L1142 1116.700M1142 1094L1118.200 1118.500" fill="none" stroke="#d4524e" stroke-width="1.200"/><line x1="2433.500" y1="600" x2="2433.500" y2="744" stroke="#8a86f0" stroke-width="1.400"/><line x1="2383.900" y1="703.600" x2="2536" y2="678.300" stroke="#8fe87f" stroke-width="1.400"/><line x1="2414.100" y1="672.100" x2="2473.900" y2="744" stroke="#e88a7e" stroke-width="1.200"/><rect x="2427.700" y="689.600" width="11.600" height="11.600" fill="#212830" stroke="#fff" stroke-width="1.300"/></svg><div class="abs" style="left:0px;top:227px;width:368px;height:1582px;background:#3b4351;"></div><div class="abs" style="left:159px;top:227px;width:163px;height:46px;background:#2f3440;border-left:2px solid #252a33;border-bottom:2px solid #252a33;"></div><div class="abs" style="left:320px;top:227px;width:48px;height:46px;background:#3b4351;border-left:2px solid #252a33;border-bottom:2px solid #252a33;"></div><span class="t" style="left:36.5px;top:239.2px;font-size:24.5px;color:#f2f2f2;letter-spacing:0.025px;text-shadow:0 1px 1px rgba(0,0,0,.5);">Drafting</span><span class="t" style="left:191.0px;top:238.7px;font-size:24.5px;color:#a9a9a9;letter-spacing:0.07px;">Modeling</span><svg style="left:338px;top:245px;" width="14" height="10" viewBox="0 0 14 10"><path d="M5 0.500 0.800 5 5 9.500M12.500 0.500 8.300 5 12.500 9.500" fill="none" stroke="#b0b0b0" stroke-width="1.500"/></svg><div class="abs" style="left:8px;top:461.8px;width:352px;height:2px;background:#242830;"></div><span class="t" style="left:34.0px;top:284.7px;font-size:20.5px;color:#f4f4f4;letter-spacing:-0.461px;text-shadow:0 1px 1px rgba(0,0,0,.6);-webkit-text-stroke:.25px #f4f4f4;">Draw</span><div class="abs" style="left:8px;top:605.8px;width:352px;height:2px;background:#242830;"></div><span class="t" style="left:34.0px;top:476.7px;font-size:20.5px;color:#f4f4f4;letter-spacing:-0.113px;text-shadow:0 1px 1px rgba(0,0,0,.6);-webkit-text-stroke:.25px #f4f4f4;">Hatch</span><div class="abs" style="left:8px;top:797.8px;width:352px;height:2px;background:#242830;"></div><span class="t" style="left:34.0px;top:620.7px;font-size:20.5px;color:#f4f4f4;letter-spacing:0.172px;text-shadow:0 1px 1px rgba(0,0,0,.6);-webkit-text-stroke:.25px #f4f4f4;">Block</span><div class="abs" style="left:8px;top:989.8px;width:352px;height:2px;background:#242830;"></div><span class="t" style="left:34.0px;top:812.7px;font-size:20.5px;color:#f4f4f4;letter-spacing:0.102px;text-shadow:0 1px 1px rgba(0,0,0,.6);-webkit-text-stroke:.25px #f4f4f4;">Modify</span><div class="abs" style="left:8px;top:1133.8px;width:352px;height:2px;background:#242830;"></div><span class="t" style="left:34.0px;top:1004.7px;font-size:20.5px;color:#f4f4f4;letter-spacing:-0.402px;text-shadow:0 1px 1px rgba(0,0,0,.6);-webkit-text-stroke:.25px #f4f4f4;">Text</span><div class="abs" style="left:8px;top:1277.8px;width:352px;height:2px;background:#242830;"></div><span class="t" style="left:34.0px;top:1148.7px;font-size:20.5px;color:#f4f4f4;letter-spacing:-0.318px;text-shadow:0 1px 1px rgba(0,0,0,.6);-webkit-text-stroke:.25px #f4f4f4;">Dimension</span><div class="abs" style="left:8px;top:1421.8px;width:352px;height:2px;background:#242830;"></div><span class="t" style="left:34.0px;top:1292.7px;font-size:20.5px;color:#f4f4f4;letter-spacing:-0.307px;text-shadow:0 1px 1px rgba(0,0,0,.6);-webkit-text-stroke:.25px #f4f4f4;">Leader</span><div class="abs" style="left:8px;top:1565.8px;width:352px;height:2px;background:#242830;"></div><span class="t" style="left:34.0px;top:1436.7px;font-size:20.5px;color:#f4f4f4;letter-spacing:-0.403px;text-shadow:0 1px 1px rgba(0,0,0,.6);-webkit-text-stroke:.25px #f4f4f4;">Table</span><div class="abs" style="left:8px;top:1709.8px;width:352px;height:2px;background:#242830;"></div><span class="t" style="left:34.0px;top:1580.7px;font-size:20.5px;color:#f4f4f4;letter-spacing:-0.211px;text-shadow:0 1px 1px rgba(0,0,0,.6);-webkit-text-stroke:.25px #f4f4f4;">Parametric</span><svg style="left:0;top:0" width="380" height="1964" viewBox="0 0 380 1964"><path d="M8.500 291.3h16.500l-8.250 8z" fill="#f2f2f2"/><g transform="translate(348.300 295.40000000000003)"><g fill="#f0f0f0"><circle cx="0" cy="0" r="6.300"/><rect x="-2.300" y="-9.300" width="4.600" height="5" transform="rotate(0)"/><rect x="-2.300" y="-9.300" width="4.600" height="5" transform="rotate(45)"/><rect x="-2.300" y="-9.300" width="4.600" height="5" transform="rotate(90)"/><rect x="-2.300" y="-9.300" width="4.600" height="5" transform="rotate(135)"/><rect x="-2.300" y="-9.300" width="4.600" height="5" transform="rotate(180)"/><rect x="-2.300" y="-9.300" width="4.600" height="5" transform="rotate(225)"/><rect x="-2.300" y="-9.300" width="4.600" height="5" transform="rotate(270)"/><rect x="-2.300" y="-9.300" width="4.600" height="5" transform="rotate(315)"/></g><circle cx="0" cy="0" r="2.700" fill="#3b4351"/></g><path d="M8.500 483.3h16.500l-8.250 8z" fill="#f2f2f2"/><g transform="translate(348.300 487.40000000000003)"><g fill="#f0f0f0"><circle cx="0" cy="0" r="6.300"/><rect x="-2.300" y="-9.300" width="4.600" height="5" transform="rotate(0)"/><rect x="-2.300" y="-9.300" width="4.600" height="5" transform="rotate(45)"/><rect x="-2.300" y="-9.300" width="4.600" height="5" transform="rotate(90)"/><rect x="-2.300" y="-9.300" width="4.600" height="5" transform="rotate(135)"/><rect x="-2.300" y="-9.300" width="4.600" height="5" transform="rotate(180)"/><rect x="-2.300" y="-9.300" width="4.600" height="5" transform="rotate(225)"/><rect x="-2.300" y="-9.300" width="4.600" height="5" transform="rotate(270)"/><rect x="-2.300" y="-9.300" width="4.600" height="5" transform="rotate(315)"/></g><circle cx="0" cy="0" r="2.700" fill="#3b4351"/></g><path d="M8.500 627.3h16.500l-8.250 8z" fill="#f2f2f2"/><g transform="translate(348.300 631.4)"><g fill="#f0f0f0"><circle cx="0" cy="0" r="6.300"/><rect x="-2.300" y="-9.300" width="4.600" height="5" transform="rotate(0)"/><rect x="-2.300" y="-9.300" width="4.600" height="5" transform="rotate(45)"/><rect x="-2.300" y="-9.300" width="4.600" height="5" transform="rotate(90)"/><rect x="-2.300" y="-9.300" width="4.600" height="5" transform="rotate(135)"/><rect x="-2.300" y="-9.300" width="4.600" height="5" transform="rotate(180)"/><rect x="-2.300" y="-9.300" width="4.600" height="5" transform="rotate(225)"/><rect x="-2.300" y="-9.300" width="4.600" height="5" transform="rotate(270)"/><rect x="-2.300" y="-9.300" width="4.600" height="5" transform="rotate(315)"/></g><circle cx="0" cy="0" r="2.700" fill="#3b4351"/></g><path d="M8.500 819.3h16.500l-8.250 8z" fill="#f2f2f2"/><g transform="translate(348.300 823.4)"><g fill="#f0f0f0"><circle cx="0" cy="0" r="6.300"/><rect x="-2.300" y="-9.300" width="4.600" height="5" transform="rotate(0)"/><rect x="-2.300" y="-9.300" width="4.600" height="5" transform="rotate(45)"/><rect x="-2.300" y="-9.300" width="4.600" height="5" transform="rotate(90)"/><rect x="-2.300" y="-9.300" width="4.600" height="5" transform="rotate(135)"/><rect x="-2.300" y="-9.300" width="4.600" height="5" transform="rotate(180)"/><rect x="-2.300" y="-9.300" width="4.600" height="5" transform="rotate(225)"/><rect x="-2.300" y="-9.300" width="4.600" height="5" transform="rotate(270)"/><rect x="-2.300" y="-9.300" width="4.600" height="5" transform="rotate(315)"/></g><circle cx="0" cy="0" r="2.700" fill="#3b4351"/></g><path d="M8.500 1011.3h16.500l-8.250 8z" fill="#f2f2f2"/><g transform="translate(348.300 1015.4)"><g fill="#f0f0f0"><circle cx="0" cy="0" r="6.300"/><rect x="-2.300" y="-9.300" width="4.600" height="5" transform="rotate(0)"/><rect x="-2.300" y="-9.300" width="4.600" height="5" transform="rotate(45)"/><rect x="-2.300" y="-9.300" width="4.600" height="5" transform="rotate(90)"/><rect x="-2.300" y="-9.300" width="4.600" height="5" transform="rotate(135)"/><rect x="-2.300" y="-9.300" width="4.600" height="5" transform="rotate(180)"/><rect x="-2.300" y="-9.300" width="4.600" height="5" transform="rotate(225)"/><rect x="-2.300" y="-9.300" width="4.600" height="5" transform="rotate(270)"/><rect x="-2.300" y="-9.300" width="4.600" height="5" transform="rotate(315)"/></g><circle cx="0" cy="0" r="2.700" fill="#3b4351"/></g><path d="M8.500 1155.3h16.500l-8.250 8z" fill="#f2f2f2"/><g transform="translate(348.300 1159.3999999999999)"><g fill="#f0f0f0"><circle cx="0" cy="0" r="6.300"/><rect x="-2.300" y="-9.300" width="4.600" height="5" transform="rotate(0)"/><rect x="-2.300" y="-9.300" width="4.600" height="5" transform="rotate(45)"/><rect x="-2.300" y="-9.300" width="4.600" height="5" transform="rotate(90)"/><rect x="-2.300" y="-9.300" width="4.600" height="5" transform="rotate(135)"/><rect x="-2.300" y="-9.300" width="4.600" height="5" transform="rotate(180)"/><rect x="-2.300" y="-9.300" width="4.600" height="5" transform="rotate(225)"/><rect x="-2.300" y="-9.300" width="4.600" height="5" transform="rotate(270)"/><rect x="-2.300" y="-9.300" width="4.600" height="5" transform="rotate(315)"/></g><circle cx="0" cy="0" r="2.700" fill="#3b4351"/></g><path d="M8.500 1299.3h16.500l-8.250 8z" fill="#f2f2f2"/><g transform="translate(348.300 1303.3999999999999)"><g fill="#f0f0f0"><circle cx="0" cy="0" r="6.300"/><rect x="-2.300" y="-9.300" width="4.600" height="5" transform="rotate(0)"/><rect x="-2.300" y="-9.300" width="4.600" height="5" transform="rotate(45)"/><rect x="-2.300" y="-9.300" width="4.600" height="5" transform="rotate(90)"/><rect x="-2.300" y="-9.300" width="4.600" height="5" transform="rotate(135)"/><rect x="-2.300" y="-9.300" width="4.600" height="5" transform="rotate(180)"/><rect x="-2.300" y="-9.300" width="4.600" height="5" transform="rotate(225)"/><rect x="-2.300" y="-9.300" width="4.600" height="5" transform="rotate(270)"/><rect x="-2.300" y="-9.300" width="4.600" height="5" transform="rotate(315)"/></g><circle cx="0" cy="0" r="2.700" fill="#3b4351"/></g><path d="M8.500 1443.3h16.500l-8.250 8z" fill="#f2f2f2"/><g transform="translate(348.300 1447.3999999999999)"><g fill="#f0f0f0"><circle cx="0" cy="0" r="6.300"/><rect x="-2.300" y="-9.300" width="4.600" height="5" transform="rotate(0)"/><rect x="-2.300" y="-9.300" width="4.600" height="5" transform="rotate(45)"/><rect x="-2.300" y="-9.300" width="4.600" height="5" transform="rotate(90)"/><rect x="-2.300" y="-9.300" width="4.600" height="5" transform="rotate(135)"/><rect x="-2.300" y="-9.300" width="4.600" height="5" transform="rotate(180)"/><rect x="-2.300" y="-9.300" width="4.600" height="5" transform="rotate(225)"/><rect x="-2.300" y="-9.300" width="4.600" height="5" transform="rotate(270)"/><rect x="-2.300" y="-9.300" width="4.600" height="5" transform="rotate(315)"/></g><circle cx="0" cy="0" r="2.700" fill="#3b4351"/></g><path d="M8.500 1587.3h16.500l-8.250 8z" fill="#f2f2f2"/><g transform="translate(348.300 1591.3999999999999)"><g fill="#f0f0f0"><circle cx="0" cy="0" r="6.300"/><rect x="-2.300" y="-9.300" width="4.600" height="5" transform="rotate(0)"/><rect x="-2.300" y="-9.300" width="4.600" height="5" transform="rotate(45)"/><rect x="-2.300" y="-9.300" width="4.600" height="5" transform="rotate(90)"/><rect x="-2.300" y="-9.300" width="4.600" height="5" transform="rotate(135)"/><rect x="-2.300" y="-9.300" width="4.600" height="5" transform="rotate(180)"/><rect x="-2.300" y="-9.300" width="4.600" height="5" transform="rotate(225)"/><rect x="-2.300" y="-9.300" width="4.600" height="5" transform="rotate(270)"/><rect x="-2.300" y="-9.300" width="4.600" height="5" transform="rotate(315)"/></g><circle cx="0" cy="0" r="2.700" fill="#3b4351"/></g><g transform="translate(20 326.8)"><path d="M7.5 56L56.5 7" stroke="#d9d9d9" stroke-width="2.4" fill="none" /><rect x="58.0" y="-0.8000000000000003" width="6.4" height="6.4" fill="#8cc6f7"/><rect x="-0.20000000000000018" y="57.199999999999996" width="6.4" height="6.4" fill="#8cc6f7"/></g><g transform="translate(108 326.8)"><path d="M8 46.2L38 46.2" stroke="#d9d9d9" stroke-width="2.2" fill="none" /><path d="M48.200 16.200A15 15 0 0 1 48.200 46.200" fill="none" stroke="#d9d9d9" stroke-width="2.2" /><rect x="-0.30000000000000027" y="43.0" width="6.4" height="6.4" fill="#8cc6f7"/><rect x="39.699999999999996" y="43.0" width="6.4" height="6.4" fill="#8cc6f7"/><rect x="39.699999999999996" y="13.0" width="6.4" height="6.4" fill="#8cc6f7"/></g><g transform="translate(196 326.8)"><circle cx="32" cy="31.3" r="30.3" fill="none" stroke="#d9d9d9" stroke-width="2.2" /><rect x="28.8" y="28.400000000000002" width="6.4" height="6.4" fill="#8cc6f7"/><path d="M37 26.5L47 16.5" stroke="#8cc6f7" stroke-width="2.2" fill="none" /><path transform="translate(52.5 11) rotate(-45)" d="M0 0L-10 -4.5L-10 4.5z" fill="#8cc6f7"/></g><path d="M270 399.8h-7.500l7.500-7.500z" fill="#9b9b9b"/><g transform="translate(284 326.8)"><path d="M10 10.6L60.8 10.6L60.8 46" stroke="#d9d9d9" stroke-width="2.2" fill="none" /><path d="M3.2 16L3.2 52.3L54 52.3" stroke="#d9d9d9" stroke-width="2.2" fill="none" /><rect x="0.0" y="7.3999999999999995" width="6.4" height="6.4" fill="#8cc6f7"/><rect x="57.599999999999994" y="49.4" width="6.4" height="6.4" fill="#8cc6f7"/></g><path d="M358 399.8h-7.500l7.500-7.500z" fill="#9b9b9b"/><g transform="translate(14 411.6)"><path d="M4 24.500C5 13 14 4.500 24 3.300" fill="none" stroke="#d9d9d9" stroke-width="2" stroke-dasharray="6.500 3.500"/><rect x="25.8" y="1.1999999999999997" width="4.4" height="4.4" fill="#8cc6f7"/><rect x="8.8" y="9.0" width="4.4" height="4.4" fill="#8cc6f7"/><rect x="1.6999999999999997" y="26.0" width="4.4" height="4.4" fill="#8cc6f7"/></g><path d="M52 449.8h-7.500l7.500-7.500z" fill="#9b9b9b"/><g transform="translate(58 411.6)"><path d="M2.500 26C3.500 18 5.500 13.500 8 11.500M11.500 12.500C15 16 18 20.500 22 22.500M26.500 19C28.500 14 29.500 9 30 6" fill="none" stroke="#d9d9d9" stroke-width="2" /><rect x="27.6" y="0.09999999999999964" width="4.4" height="4.4" fill="#8cc6f7"/><rect x="5.8" y="8.3" width="4.4" height="4.4" fill="#8cc6f7"/><rect x="21.8" y="20.2" width="4.4" height="4.4" fill="#8cc6f7"/><rect x="-0.20000000000000018" y="28.1" width="4.4" height="4.4" fill="#8cc6f7"/></g><path d="M96 449.8h-7.500l7.500-7.500z" fill="#9b9b9b"/><g transform="translate(102 411.6)"><path d="M6.3 8.3L19 8.3" stroke="#d9d9d9" stroke-width="2" fill="none" /><path d="M6.3 24.3L26 24.3" stroke="#d9d9d9" stroke-width="2" fill="none" /><path d="M0 16.2L32 16.2" stroke="#8cc6f7" stroke-width="2" fill="none" stroke-dasharray="12 2.500 3.500 2.500"/><circle cx="28" cy="4.3" r="9.4" fill="#e5783c" stroke="#fff" stroke-width="1.6" /></g><path d="M140 449.8h-7.500l7.500-7.500z" fill="#9b9b9b"/><g transform="translate(146 411.6)"><path d="M7 25L25 7" stroke="#d9d9d9" stroke-width="2.2" fill="none" stroke-dasharray="5 4.500"/><path transform="translate(32.2 0.3) rotate(-45)" d="M0 0L-10 -4.75L-10 4.75z" fill="#d9d9d9"/><path transform="translate(-0.2 32.3) rotate(135)" d="M0 0L-10 -4.75L-10 4.75z" fill="#d9d9d9"/><rect x="13.8" y="14.0" width="4.4" height="4.4" fill="#8cc6f7"/></g><path d="M184 449.8h-7.500l7.500-7.500z" fill="#9b9b9b"/><g transform="translate(190 411.6)"><path d="M19 6.600A13.700 9.700 0 0 0 1.300 16A13.700 9.700 0 0 0 15 25.700A13.700 9.700 0 0 0 27 19.500" fill="none" stroke="#d9d9d9" stroke-width="2" /><path d="M21 7.200A13.700 9.700 0 0 1 27.500 12" fill="none" stroke="#d9d9d9" stroke-width="2" /><rect x="12.8" y="5.0" width="4.4" height="4.4" fill="#8cc6f7"/><rect x="12.8" y="14.0" width="4.4" height="4.4" fill="#8cc6f7"/><rect x="26.0" y="14.0" width="4.4" height="4.4" fill="#8cc6f7"/></g><path d="M228 449.8h-7.500l7.500-7.500z" fill="#9b9b9b"/><g transform="translate(234 411.6)"><path d="M3.2 7.6A3.89 3.89 0 0 1 9.6 6.6A3.84 3.84 0 0 1 16 6.6A3.84 3.84 0 0 1 22.4 6.6A3.89 3.89 0 0 1 28.8 7.6A2.94 2.94 0 0 1 29.8 12.4A4.68 4.68 0 0 1 29.8 20.2A2.94 2.94 0 0 1 28.8 25A3.89 3.89 0 0 1 22.4 26A3.84 3.84 0 0 1 16 26A3.84 3.84 0 0 1 9.6 26A3.89 3.89 0 0 1 3.2 25A2.94 2.94 0 0 1 2.2 20.2A4.68 4.68 0 0 1 2.2 12.4A2.94 2.94 0 0 1 3.2 7.6z" fill="none" stroke="#d9d9d9" stroke-width="2" /></g><path d="M272 449.8h-7.500l7.500-7.500z" fill="#9b9b9b"/><g transform="translate(278 411.6)"><rect x="14.0" y="4.3" width="4.4" height="4.4" fill="#d9d9d9"/><rect x="3.8999999999999995" y="14.0" width="4.4" height="4.4" fill="#d9d9d9"/><rect x="23.8" y="14.0" width="4.4" height="4.4" fill="#d9d9d9"/><rect x="14.0" y="24.400000000000002" width="4.4" height="4.4" fill="#d9d9d9"/></g><path d="M316 449.8h-7.500l7.500-7.500z" fill="#9b9b9b"/><g transform="translate(322 411.6)"><path d="M0 15.3L9 15.3L12.8 4.2L18.7 28.1L23.2 15.3L32.2 15.3" stroke="#d9d9d9" stroke-width="2" fill="none" /></g><g transform="translate(20 518.8)"><clipPath id="hc1"><rect x="12" y="11" width="40.6" height="40.6"/></clipPath><g clip-path="url(#hc1)"><path d="M-28.6 51.6L12.0 11" stroke="#8cc6f7" stroke-width="2" fill="none" /><path d="M-19.1 51.6L21.5 11" stroke="#8cc6f7" stroke-width="2" fill="none" /><path d="M-9.600000000000001 51.6L31.0 11" stroke="#8cc6f7" stroke-width="2" fill="none" /><path d="M-0.10000000000000142 51.6L40.5 11" stroke="#8cc6f7" stroke-width="2" fill="none" /><path d="M9.399999999999999 51.6L50.0 11" stroke="#8cc6f7" stroke-width="2" fill="none" /><path d="M18.9 51.6L59.5 11" stroke="#8cc6f7" stroke-width="2" fill="none" /><path d="M28.4 51.6L69.0 11" stroke="#8cc6f7" stroke-width="2" fill="none" /><path d="M37.9 51.6L78.5 11" stroke="#8cc6f7" stroke-width="2" fill="none" /><path d="M47.4 51.6L88.0 11" stroke="#8cc6f7" stroke-width="2" fill="none" /></g><path d="M0 8.3L64 8.3" stroke="#d9d9d9" stroke-width="2" fill="none" /><path d="M0 54.3L64 54.3" stroke="#d9d9d9" stroke-width="2" fill="none" /><path d="M9 -0.5L9 63.5" stroke="#d9d9d9" stroke-width="2" fill="none" /><path d="M55 -0.5L55 63.5" stroke="#d9d9d9" stroke-width="2" fill="none" /></g><g transform="translate(108 518.8)"><clipPath id="hc2"><rect x="11.5" y="11" width="36.0" height="36"/></clipPath><g clip-path="url(#hc2)"><path d="M-24.5 47L11.5 11" stroke="#8cc6f7" stroke-width="2" fill="none" /><path d="M-15.0 47L21.0 11" stroke="#8cc6f7" stroke-width="2" fill="none" /><path d="M-5.5 47L30.5 11" stroke="#8cc6f7" stroke-width="2" fill="none" /><path d="M4.0 47L40.0 11" stroke="#8cc6f7" stroke-width="2" fill="none" /><path d="M13.5 47L49.5 11" stroke="#8cc6f7" stroke-width="2" fill="none" /><path d="M23.0 47L59.0 11" stroke="#8cc6f7" stroke-width="2" fill="none" /><path d="M32.5 47L68.5 11" stroke="#8cc6f7" stroke-width="2" fill="none" /><path d="M42.0 47L78.0 11" stroke="#8cc6f7" stroke-width="2" fill="none" /></g><path d="M0 8.3L16 8.3" stroke="#d9d9d9" stroke-width="2" fill="none" /><path d="M44 8.3L60 8.3" stroke="#d9d9d9" stroke-width="2" fill="none" /><path d="M0 50.3L30 50.3" stroke="#d9d9d9" stroke-width="2" fill="none" /><path d="M8.8 -0.5L8.8 59.5" stroke="#d9d9d9" stroke-width="2" fill="none" /><path d="M51.3 -0.5L51.3 30" stroke="#d9d9d9" stroke-width="2" fill="none" /><path d="M18 9.300c0-2 1-3 3-3h1.500v-3.500c0-1 .5-1.500 1.500-1.500h12c1 0 1.500.5 1.500 1.500v3.500h1.500c2 0 3 1 3 3z" fill="#fff" stroke="none" stroke-width="2" /><rect x="32" y="31" width="32" height="32.2" fill="#93b8e2" stroke="none" stroke-width="2" rx="0" /><circle cx="55.2" cy="40.3" r="5" fill="#fbe9a3" stroke="none" stroke-width="2" /><path d="M32 52c3-5 6-7.500 9-7.500s6 5 8.500 9c1.500-2.500 3.500-4 5.500-4s5.500 4 9 9v4.700H32z" fill="#5b8fc0" stroke="none" stroke-width="2" /><path d="M32 57c4-3 8-4 12-2s8 3 12 .5 6-1 8 1v6.700H32z" fill="#6a9bc9" stroke="none" stroke-width="2" opacity=".6"/></g><path d="M182 591.8h-7.500l7.500-7.500z" fill="#9b9b9b"/><g transform="translate(196 518.8)"><defs><linearGradient id="hg" x1="0" x2="0" y1="0" y2="1"><stop offset="0" stop-color="#8cc6f7"/><stop offset=".5" stop-color="#7c8ca8"/><stop offset="1" stop-color="#3f4757"/></linearGradient></defs><rect x="12" y="11.4" width="40.2" height="40.2" fill="url(#hg)" stroke="none" stroke-width="2" rx="0" /><path d="M0 8.3L64 8.3" stroke="#d9d9d9" stroke-width="2" fill="none" /><path d="M0 54.3L64 54.3" stroke="#d9d9d9" stroke-width="2" fill="none" /><path d="M9 -0.5L9 63.5" stroke="#d9d9d9" stroke-width="2" fill="none" /><path d="M55 -0.5L55 63.5" stroke="#d9d9d9" stroke-width="2" fill="none" /></g><g transform="translate(278 512.4)"><path d="M0 4.6L32 4.6" stroke="#8cc6f7" stroke-width="2" fill="none" /><path d="M0 26.8L32 26.8" stroke="#8cc6f7" stroke-width="2" fill="none" /><path d="M5 0L5 32" stroke="#8cc6f7" stroke-width="2" fill="none" /><path d="M27 0L27 32" stroke="#8cc6f7" stroke-width="2" fill="none" /></g><g transform="translate(322 512.4)"><path d="M0 2.600H19.700L32 15.500V28.600H0z" fill="#d9d9d9" stroke="none" stroke-width="2" /><circle cx="14.8" cy="15.5" r="5" fill="#3b4351" stroke="none" stroke-width="2" /></g><g transform="translate(278 555.8)"><clipPath id="hc3"><path d="M0 0h32v32H0zM5 5v22h22V5z" clip-rule="evenodd"/></clipPath><rect x="0" y="0.4" width="32" height="32" fill="#5a606c" stroke="none" stroke-width="2" rx="0" /><g clip-path="url(#hc3)"><path d="M-32 32.4L0 0.4" stroke="#e4e4e4" stroke-width="2.6" fill="none" /><path d="M-26 32.4L6 0.4" stroke="#e4e4e4" stroke-width="2.6" fill="none" /><path d="M-20 32.4L12 0.4" stroke="#e4e4e4" stroke-width="2.6" fill="none" /><path d="M-14 32.4L18 0.4" stroke="#e4e4e4" stroke-width="2.6" fill="none" /><path d="M-8 32.4L24 0.4" stroke="#e4e4e4" stroke-width="2.6" fill="none" /><path d="M-2 32.4L30 0.4" stroke="#e4e4e4" stroke-width="2.6" fill="none" /><path d="M4 32.4L36 0.4" stroke="#e4e4e4" stroke-width="2.6" fill="none" /><path d="M10 32.4L42 0.4" stroke="#e4e4e4" stroke-width="2.6" fill="none" /><path d="M16 32.4L48 0.4" stroke="#e4e4e4" stroke-width="2.6" fill="none" /><path d="M22 32.4L54 0.4" stroke="#e4e4e4" stroke-width="2.6" fill="none" /><path d="M28 32.4L60 0.4" stroke="#e4e4e4" stroke-width="2.6" fill="none" /><path d="M34 32.4L66 0.4" stroke="#e4e4e4" stroke-width="2.6" fill="none" /></g><rect x="5" y="5.4" width="22" height="22" fill="#3b4351" stroke="none" stroke-width="2" rx="0" /><path d="M6.200 8.600H18.100V14.800H25.900V24.500H6.200z" fill="#8cc6f7" stroke="none" stroke-width="2" /></g><g transform="translate(20 662.8)"><rect x="2.4" y="24" width="37.1" height="28.1" fill="#6b7080" stroke="#d9d9d9" stroke-width="2" rx="0" /><circle cx="39.1" cy="50.3" r="12.4" fill="#6b7080" stroke="#d9d9d9" stroke-width="2" /><path d="M39.5 24L39.5 52.1L2.4 52.1" stroke="#d9d9d9" stroke-width="1.6" fill="none" opacity=".85"/><path d="M39.5 38.9V52.1H27.700000000000003" fill="none" stroke="#d9d9d9" stroke-width="1.6" /><rect x="-0.6000000000000001" y="49.1" width="6" height="6" fill="#d9d9d9" stroke="none" stroke-width="2" rx="0" /><path d="M46.80 -2.70L49.58 7.74L57.97 0.93L54.08 11.01L64.87 10.43L55.80 16.30L64.87 22.17L54.08 21.59L57.97 31.67L49.58 24.86L46.80 35.30L44.02 24.86L35.63 31.67L39.52 21.59L28.73 22.17L37.80 16.30L28.73 10.43L39.52 11.01L35.63 0.93L44.02 7.74z" fill="#3b4351"/><path d="M46.80 -0.20L48.81 10.12L56.50 2.95L52.06 12.48L62.49 11.20L53.30 16.30L62.49 21.40L52.06 20.12L56.50 29.65L48.81 22.48L46.80 32.80L44.79 22.48L37.10 29.65L41.54 20.12L31.11 21.40L40.30 16.30L31.11 11.20L41.54 12.48L37.10 2.95L44.79 10.12z" fill="#f5d283"/></g><g transform="translate(108 662.8)"><path d="M28.900 1.400H52.800L62.100 10.700V45.200H28.900z" fill="#93c5f5" stroke="none" stroke-width="2" /><path d="M52.800 1.400L62.100 10.700H52.800z" fill="#cfe6fb" stroke="none" stroke-width="2" /><circle cx="40.8" cy="46" r="17" fill="#3b4351" stroke="none" stroke-width="2" /><rect x="2.4" y="17.7" width="41.3" height="31" fill="#3b4351" stroke="none" stroke-width="2" rx="0" /><rect x="4.4" y="19.7" width="37.300000000000004" height="27.000000000000004" fill="#6b7080" stroke="#d9d9d9" stroke-width="2" rx="0" /><circle cx="40.8" cy="46" r="14.2" fill="#6b7080" stroke="#d9d9d9" stroke-width="2" /><path d="M41.7 19.7L41.7 46.7L4.4 46.7" stroke="#d9d9d9" stroke-width="1.6" fill="none" opacity=".85"/><path d="M41.7 32.8V46.7H27.599999999999998" fill="none" stroke="#d9d9d9" stroke-width="1.6" /><rect x="1.4000000000000004" y="43.7" width="6" height="6" fill="#d9d9d9" stroke="none" stroke-width="2" rx="0" /></g><g transform="translate(196 662.8)"><rect x="4.6" y="17.8" width="40.6" height="30.900000000000002" fill="#6b7080" stroke="#d9d9d9" stroke-width="2" rx="0" /><circle cx="44.8" cy="46" r="12.4" fill="#6b7080" stroke="#d9d9d9" stroke-width="2" /><path d="M45.2 17.8L45.2 48.7L4.6 48.7" stroke="#d9d9d9" stroke-width="1.6" fill="none" opacity=".85"/><path d="M45.2 34.6V48.7H33.4" fill="none" stroke="#d9d9d9" stroke-width="1.6" /><rect x="1.5999999999999996" y="45.7" width="6" height="6" fill="#d9d9d9" stroke="none" stroke-width="2" rx="0" /><g transform="translate(29.8 -0.6) scale(1.0) rotate(5.4 0 36)"><path d="M0 36L4.600 23.630L21.920 6.300A5.500 5.500 0 0 1 29.700 14.080L12.370 31.400z" fill="#3b4351" stroke="#3b4351" stroke-width="3.4" stroke-linejoin="round"/><path d="M0 36L12.370 31.400L4.600 23.630z" fill="#e2e2e2" stroke="none" stroke-width="2" /><path d="M0 36L4.200 34.440L1.560 31.800z" fill="#4a4a4a" stroke="none" stroke-width="2" /><path d="M12.370 31.400L25.810 17.970L18.030 10.190L4.600 23.630z" fill="#f3d27e" stroke="none" stroke-width="2" /><path d="M25.810 17.970L29.700 14.080A5.500 5.500 0 0 0 21.920 6.300L18.030 10.190z" fill="#e2686a" stroke="none" stroke-width="2" /></g></g><g transform="translate(284 662.8)"><path d="M0.2 3.1L29.9 3.1L60 35.1L31.5 63L0.2 31z" fill="#d9d9d9" stroke="none" stroke-width="2" /><circle cx="12.1" cy="15" r="3.9" fill="#3b4351" stroke="none" stroke-width="2" /><path d="M14 31l17 17M20 27l17 17M26 24l13 13M22 21l4 4M17 26l3 3" fill="none" stroke="#8d8d8d" stroke-width="2" /><g transform="translate(29.9 -5.4) scale(1.04) rotate(6.5 0 36)"><path d="M0 36L4.600 23.630L21.920 6.300A5.500 5.500 0 0 1 29.700 14.080L12.370 31.400z" fill="#3b4351" stroke="#3b4351" stroke-width="3.4" stroke-linejoin="round"/><path d="M0 36L12.370 31.400L4.600 23.630z" fill="#e2e2e2" stroke="none" stroke-width="2" /><path d="M0 36L4.200 34.440L1.560 31.800z" fill="#4a4a4a" stroke="none" stroke-width="2" /><path d="M12.370 31.400L25.810 17.970L18.030 10.190L4.600 23.630z" fill="#f3d27e" stroke="none" stroke-width="2" /><path d="M25.810 17.970L29.700 14.080A5.500 5.500 0 0 0 21.920 6.300L18.030 10.190z" fill="#e2686a" stroke="none" stroke-width="2" /></g></g><path d="M358 735.8h-7.500l7.500-7.500z" fill="#9b9b9b"/><g transform="translate(14 747.5999999999999)"><path d="M1 1.9L15.4 1.9L30.8 17.2L16.9 31.2L1 16.1z" fill="#d9d9d9" stroke="none" stroke-width="2" /><circle cx="6.8" cy="7.4" r="2" fill="#3b4351" stroke="none" stroke-width="2" /><path d="M8.500 14l11 11M12.500 10.500l11 11" fill="none" stroke="#8d8d8d" stroke-width="1.6" /></g><g transform="translate(58 747.5999999999999)"><rect x="1" y="10.7" width="13.7" height="15.400000000000002" fill="#6b7080" stroke="#d9d9d9" stroke-width="1.6" rx="0" /><circle cx="20.4" cy="25.7" r="5.9" fill="#6b7080" stroke="#d9d9d9" stroke-width="1.6" /><path d="M14.7 10.7L14.7 26.1L1 26.1" stroke="#d9d9d9" stroke-width="1.2800000000000002" fill="none" opacity=".85"/><path d="M14.7 20.799999999999997V26.1H15.499999999999998" fill="none" stroke="#d9d9d9" stroke-width="1.2800000000000002" /><rect x="-1.2000000000000002" y="23.900000000000002" width="4.4" height="4.4" fill="#d9d9d9" stroke="none" stroke-width="2" rx="0" /><rect x="13.9" y="0.3" width="18.3" height="16.6" fill="#f0f0f0" stroke="none" stroke-width="2" rx="0" /><rect x="13.9" y="0.3" width="18.3" height="4" fill="#9a9a9a" stroke="none" stroke-width="2" rx="0" /><path d="M17 8h2.500M21.500 8h8M17 12.500h2.500M21.500 12.500h8" fill="none" stroke="#6a6a6a" stroke-width="1.8" /></g><g transform="translate(102 747.5999999999999)"><rect x="1.6" y="10.7" width="13.200000000000001" height="15.400000000000002" fill="#6b7080" stroke="#d9d9d9" stroke-width="1.6" rx="0" /><circle cx="20.4" cy="25.7" r="5.9" fill="#6b7080" stroke="#d9d9d9" stroke-width="1.6" /><path d="M14.8 10.7L14.8 26.1L1.6 26.1" stroke="#d9d9d9" stroke-width="1.2800000000000002" fill="none" opacity=".85"/><path d="M14.8 20.799999999999997V26.1H15.499999999999998" fill="none" stroke="#d9d9d9" stroke-width="1.2800000000000002" /><rect x="-0.6000000000000001" y="23.900000000000002" width="4.4" height="4.4" fill="#d9d9d9" stroke="none" stroke-width="2" rx="0" /><rect x="14.8" y="-0.5" width="18.4" height="18.4" fill="#3b4351" stroke="none" stroke-width="2" rx="0" /><g transform="translate(15.8 0.3)"><path d="M0 0H16.4V16.6H2.500L0 14.100000000000001z" fill="#a9a9a9" stroke="none" stroke-width="2" /><rect x="3.6079999999999997" y="0" width="9.184" height="5.976" fill="#f0f0f0" stroke="none" stroke-width="2" rx="0" /><rect x="3.6079999999999997" y="10.956000000000001" width="9.839999999999998" height="4.648000000000001" fill="#f0f0f0" stroke="none" stroke-width="2" rx="0" /><rect x="4.919999999999999" y="12.118" width="2.9519999999999995" height="2.656" fill="#555" stroke="none" stroke-width="2" rx="0" /></g></g><g transform="translate(146 747.5999999999999)"><rect x="17.9" y="5.7" width="14" height="19.7" fill="none" stroke="#d9d9d9" stroke-width="2" rx="0" /><rect x="6.3" y="11.4" width="19.4" height="19.4" fill="#3b4351" stroke="#d9d9d9" stroke-width="2" rx="0" /><rect x="0" y="1.7" width="16" height="15.9" fill="#8fd9a2" stroke="none" stroke-width="2" rx="0" /><g transform="translate(6 4.5) scale(1.05)"><path d="M0 0V17L4.200 13.200 7.200 20 10 18.800 7 12.200H12.500z" fill="#fff" stroke="#3b4351" stroke-width="1.2" /></g></g><g transform="translate(190 747.5999999999999)"><rect x="1.4" y="1.5" width="25.6" height="25.6" fill="#6b7080" stroke="#d9d9d9" stroke-width="2" rx="0" /><rect x="19" y="19" width="14" height="14" fill="#3b4351" stroke="none" stroke-width="2" rx="0" /><path d="M26 19.800v12.400M19.800 26h12.400" fill="none" stroke="#7db8f0" stroke-width="4.5" /></g><g transform="translate(234 747.5999999999999)"><path d="M0 2.6L13.5 2.6L29.7 18.4L15.8 32L0 16.9z" fill="#d9d9d9" stroke="none" stroke-width="2" /><circle cx="6" cy="8.4" r="2" fill="#3b4351" stroke="none" stroke-width="2" /><path d="M8 16.500l9 9M12 13l9 9" fill="none" stroke="#8d8d8d" stroke-width="1.6" /><circle cx="23.8" cy="8.4" r="9.5" fill="#3b4351" stroke="none" stroke-width="2" /><path d="M17.6 8.4A6.2 6.2 0 0 1 28.450000000000003 4.308" fill="none" stroke="#78d285" stroke-width="2.6" /><path transform="translate(30.93 7.470000000000001) rotate(70)" d="M0 0L-5.89 -3.4100000000000006L-5.89 3.4100000000000006z" fill="#78d285"/><path d="M30.0 8.4A6.2 6.2 0 0 1 19.15 12.492" fill="none" stroke="#78d285" stroke-width="2.6" /><path transform="translate(16.67 9.33) rotate(250)" d="M0 0L-5.89 -3.4100000000000006L-5.89 3.4100000000000006z" fill="#78d285"/></g><g transform="translate(278 747.5999999999999)"><path d="M0 2.6L13.5 2.6L29.7 18.4L15.8 32L0 16.9z" fill="#d9d9d9" stroke="none" stroke-width="2" /><circle cx="6" cy="8.4" r="2" fill="#3b4351" stroke="none" stroke-width="2" /><path d="M8 16.500l9 9M12 13l9 9" fill="none" stroke="#8d8d8d" stroke-width="1.6" /><rect x="14.8" y="-0.7" width="18.4" height="18.4" fill="#3b4351" stroke="none" stroke-width="2" rx="0" /><rect x="19.5" y="3.8" width="9" height="9.6" fill="#6aa9e8" stroke="none" stroke-width="2" rx="0" /><path d="M19 1.500h10M19 15.700h10" fill="none" stroke="#6aa9e8" stroke-width="2.2" /><path d="M17 4v9.500M31 4v9.500" fill="none" stroke="#6aa9e8" stroke-width="2.2" stroke-dasharray="2.700 1.200"/></g><g transform="translate(322 747.5999999999999)"><rect x="1.5" y="1.2" width="13.0" height="9.600000000000001" fill="#6b7080" stroke="#d9d9d9" stroke-width="1.5" rx="0" /><circle cx="15.2" cy="9.1" r="3.9" fill="#6b7080" stroke="#d9d9d9" stroke-width="1.5" /><path d="M14.5 1.2L14.5 10.8L1.5 10.8" stroke="#d9d9d9" stroke-width="1.2000000000000002" fill="none" opacity=".85"/><path d="M14.5 6.199999999999999V10.8H12.299999999999999" fill="none" stroke="#d9d9d9" stroke-width="1.2000000000000002" /><rect x="-0.25" y="9.05" width="3.5" height="3.5" fill="#d9d9d9" stroke="none" stroke-width="2" rx="0" /><path d="M31 12.500V6h-6" fill="none" stroke="#fff" stroke-width="2.2" /><path transform="translate(21.5 6) rotate(180)" d="M0 0L-5.5 -3.5L-5.5 3.5z" fill="#fff"/><rect x="11.3" y="17.8" width="14.2" height="10.8" fill="#4f6a8d" stroke="#7db8f0" stroke-width="2" rx="0" /><circle cx="26" cy="26.1" r="5.1" fill="#4f6a8d" stroke="#7db8f0" stroke-width="2" /><path d="M25.5 17.8L25.5 28.6L11.3 28.6" stroke="#7db8f0" stroke-width="1.6" fill="none" opacity=".85"/><path d="M25.5 22.0V28.6H21.9" fill="none" stroke="#7db8f0" stroke-width="1.6" /><rect x="9.3" y="26.6" width="4" height="4" fill="#7db8f0" stroke="none" stroke-width="2" rx="0" /></g><g transform="translate(20 854.8)"><path d="M32 -0.900 42 15.200H34.100V29H48V21L64 31.100 48 41.200V33.200H34.100V47.300H42L32 63.300 22 47.300H29.900V33.200H16V41.200L0.100 31.100 16 21V29H29.900V15.200H22z" fill="#fff" stroke="none" stroke-width="2" /></g><g transform="translate(102 847.8)"><path d="M2.900 0.200H14.800V26.100H2.900z" fill="#d9d9d9" stroke="none" stroke-width="2" /><path d="M9 0.700H22.500L29.100 7.500V32H9z" fill="#d9d9d9" stroke="#3b4351" stroke-width="0" /><path d="M7.800 -0.500H22.900L30.300 7V33H7.800z" fill="#3b4351" stroke="none" stroke-width="2" /><path d="M9 0.700H22.300L29.100 7.500V32H9z" fill="#d9d9d9" stroke="none" stroke-width="2" /><path d="M22.300 0.700V7.500H29.100z" fill="#f4f4f4" stroke="#3b4351" stroke-width="1" /></g><g transform="translate(146 847.8)"><path d="M29.300 16.500A13.500 13.500 0 1 1 15.900 4.500" fill="none" stroke="#fff" stroke-width="2.2" /><path d="M15.500 -0.500 24.500 5 15.500 10.300z" fill="#fff" stroke="none" stroke-width="2" /></g><g transform="translate(102 892.3)"><path d="M14 4.500V29.200H2.300z" fill="none" stroke="#d9d9d9" stroke-width="2" /><path d="M17.900 4.500V29.200H30z" fill="none" stroke="#8cc6f7" stroke-width="2" /></g><g transform="translate(146 892.3)"><rect x="3.3" y="3.2" width="17.3" height="17.3" fill="none" stroke="#fff" stroke-width="1.8" rx="0" stroke-dasharray="3.200 2.600"/><rect x="1.0999999999999996" y="1.0" width="4.4" height="4.4" fill="#fff"/><rect x="1.0999999999999996" y="9.600000000000001" width="4.4" height="4.4" fill="#fff"/><rect x="1.0999999999999996" y="18.2" width="4.4" height="4.4" fill="#fff"/><rect x="9.8" y="1.0" width="4.4" height="4.4" fill="#fff"/><rect x="9.8" y="9.600000000000001" width="4.4" height="4.4" fill="#fff"/><rect x="9.8" y="18.2" width="4.4" height="4.4" fill="#fff"/><rect x="18.400000000000002" y="1.0" width="4.4" height="4.4" fill="#fff"/><rect x="18.400000000000002" y="9.600000000000001" width="4.4" height="4.4" fill="#fff"/><rect x="15" y="10.5" width="9" height="9" fill="#3b4351" stroke="none" stroke-width="2" rx="0" /><path d="M17.500 12.500 31.900 25.500 24 26.500 18.800 31.500z" fill="#fff" stroke="none" stroke-width="2" /><path d="M28.800 7.500v6.400M25.600 10.700h6.400" fill="none" stroke="#fff" stroke-width="1.8" /></g><g transform="translate(196 854.8)"><path d="M0 4.1L32 4.1" stroke="#8cc6f7" stroke-width="2" fill="none" stroke-dasharray="8.500 3.500"/><path d="M48 4.1L64 4.1" stroke="#d9d9d9" stroke-width="2" fill="none" /><path d="M35.500 -0.500 43.500 7.500V34L39 38z" fill="#fff" stroke="none" stroke-width="2" /><path d="M15.500 11.500 38.500 35 35.500 39.500 15.500 21z" fill="#fff" stroke="none" stroke-width="2" /><g transform="translate(36 52) rotate(12)"><ellipse cx="0" cy="0" rx="5.5" ry="10" fill="none" stroke="#fff" stroke-width="3.8" /></g><g transform="translate(51 46.500) rotate(-52)"><ellipse cx="0" cy="0" rx="5.8" ry="10.5" fill="none" stroke="#fff" stroke-width="3.8" /></g><path d="M34.500 33.500 43.500 36.500 45 41 38 45 33 42z" fill="#fff" stroke="none" stroke-width="2" /><circle cx="39.2" cy="37.5" r="2.4" fill="#3b4351" stroke="none" stroke-width="2" /></g><path d="M270 928.3h-7.500l7.500-7.500z" fill="#9b9b9b"/><g transform="translate(278 847.8)"><path d="M1.100 18.300A17.200 17.200 0 0 1 18.300 1.100" fill="none" stroke="#8cc6f7" stroke-width="2.2" /><path d="M20.1 1.1L32 1.1" stroke="#d9d9d9" stroke-width="2" fill="none" /><path d="M1.1 20.3L1.1 32" stroke="#d9d9d9" stroke-width="2" fill="none" /></g><path d="M316 886.8h-7.500l7.500-7.500z" fill="#9b9b9b"/><g transform="translate(322 847.8)"><rect x="3.4" y="3.4" width="9.8" height="9.8" fill="none" stroke="#d9d9d9" stroke-width="2.2" rx="0" /><rect x="19.2" y="3.4" width="9.8" height="9.8" fill="none" stroke="#8cc6f7" stroke-width="2.2" rx="0" /><rect x="3.4" y="19.2" width="9.8" height="9.8" fill="none" stroke="#8cc6f7" stroke-width="2.2" rx="0" /><rect x="19.2" y="19.2" width="9.8" height="9.8" fill="none" stroke="#8cc6f7" stroke-width="2.2" rx="0" /></g><path d="M360 886.8h-7.500l7.500-7.500z" fill="#9b9b9b"/><g transform="translate(278 892.3)"><path d="M32 4.500H12.500A11.500 11.500 0 0 0 12.500 27.500H32" fill="none" stroke="#8cc6f7" stroke-width="2.2" /><path d="M32 10.700H12.500A5.300 5.300 0 0 0 12.500 21.300H32" fill="none" stroke="#d9d9d9" stroke-width="2.2" /></g><g transform="translate(322 892.3)"><path d="M5.500 13.500 13.500 5.500H31L22.500 13.500zM31 5.500V21L22.500 29.500" fill="none" stroke="#8cc6f7" stroke-width="2.2" /><path d="M1.2 14.5L1.2 29.5" stroke="#8cc6f7" stroke-width="2.2" fill="none" /><rect x="5.5" y="13.5" width="17" height="16" fill="none" stroke="#d9d9d9" stroke-width="2.2" rx="0" /></g><g transform="translate(14 939.5999999999999)"><path d="M12.800 26V31.700H1.200V0.800H13.800V21" fill="none" stroke="#d9d9d9" stroke-width="2" /><path d="M16.200 1H21.500L31 31.500H16.200" fill="none" stroke="#8cc6f7" stroke-width="2" /><path d="M7.7 23.3L16 23.3" stroke="#fff" stroke-width="2.2" fill="none" /><path transform="translate(22.5 23.3) rotate(0)" d="M0 0L-7.5 -4.0L-7.5 4.0z" fill="#fff"/></g><g transform="translate(58 939.5999999999999)"><path d="M0 4.500 4.500 0.200H17.800V13.800L13.300 18.200H0z" fill="#d6d6d6" stroke="none" stroke-width="2" /><path d="M13.300 4.500 17.800 0.200V13.800L13.300 18.200z" fill="#b4b4b4" stroke="none" stroke-width="2" /><path d="M0 4.500 4.500 0.200H17.800L13.300 4.500z" fill="#ececec" stroke="none" stroke-width="2" /><rect x="18" y="18.2" width="14" height="14" fill="#93c5f5" stroke="none" stroke-width="2" rx="0" /><path d="M3 22.500V26.500H8" fill="none" stroke="#fff" stroke-width="2" /><path transform="translate(13 26.5) rotate(0)" d="M0 0L-5.5 -3.25L-5.5 3.25z" fill="#fff"/></g><g transform="translate(102 939.5999999999999)"><path d="M1.400 12V1.800H30.800V30.700H20.200" fill="none" stroke="#8cc6f7" stroke-width="2.2" /><rect x="1.4" y="15.6" width="15.6" height="15.1" fill="none" stroke="#d9d9d9" stroke-width="2.2" rx="0" /></g><g transform="translate(146 939.5999999999999)"><path d="M20 8.100H1.500V26.500H30.500V8.100H26.500" fill="none" stroke="#d9d9d9" stroke-width="2.2" /><path d="M23 2.3L23 12.5" stroke="#8cc6f7" stroke-width="2.2" fill="none" /></g><path d="M184 977.8h-7.500l7.500-7.500z" fill="#9b9b9b"/><g transform="translate(190 939.5999999999999)"><path d="M0 16.4L32 16.4" stroke="#d9d9d9" stroke-width="2" fill="none" /><path d="M6.700 11.500 15.600 16.400 6.700 21.300z" fill="#8cc6f7" stroke="none" stroke-width="2" /><path d="M25.300 11.500 16.600 16.400 25.300 21.300z" fill="#8cc6f7" stroke="none" stroke-width="2" /></g><g transform="translate(234 939.5999999999999)"><rect x="0.3" y="2.8" width="19.3" height="15.4" fill="#a9a9a9" stroke="none" stroke-width="2" rx="0" /><rect x="11.5" y="14.5" width="22" height="17" fill="#3b4351" stroke="none" stroke-width="2" rx="0" /><rect x="13.7" y="16.6" width="17.2" height="12.6" fill="none" stroke="#d9d9d9" stroke-width="2" rx="0" /><path d="M17.500 26.500H24L17.500 20z" fill="#d9d9d9" stroke="none" stroke-width="2" /><path d="M22.500 5.500H29V9" fill="none" stroke="#fff" stroke-width="2.2" /><path transform="translate(29 13.5) rotate(90)" d="M0 0L-5 -3.5L-5 3.5z" fill="#fff"/><path d="M9.500 27.500H4V24.500" fill="none" stroke="#fff" stroke-width="2.2" /><path transform="translate(4 20) rotate(-90)" d="M0 0L-5 -3.5L-5 3.5z" fill="#fff"/></g><g transform="translate(278 939.5999999999999)"><rect x="2" y="1.8" width="16.5" height="11.7" fill="#6b7080" stroke="#d9d9d9" stroke-width="1.8" rx="0" /><circle cx="17.9" cy="13.1" r="6.5" fill="#6b7080" stroke="#d9d9d9" stroke-width="1.8" /><path d="M18.5 1.8L18.5 13.5L2 13.5" stroke="#d9d9d9" stroke-width="1.4400000000000002" fill="none" opacity=".85"/><path d="M18.5 7.6V13.5H12.399999999999999" fill="none" stroke="#d9d9d9" stroke-width="1.4400000000000002" /><rect x="0.0" y="11.5" width="4" height="4" fill="#d9d9d9" stroke="none" stroke-width="2" rx="0" /><path d="M5.500 20.500V26.500H11" fill="none" stroke="#fff" stroke-width="2.2" /><path transform="translate(17 26.5) rotate(0)" d="M0 0L-6.5 -4.0L-6.5 4.0z" fill="#fff"/><circle cx="25.9" cy="26.4" r="5" fill="none" stroke="#8cc6f7" stroke-width="2.2" /></g><g transform="translate(322 939.5999999999999)"><rect x="14.6" y="0.5" width="2.8" height="19.5" fill="#d2ad78" stroke="none" stroke-width="2" rx="0" /><path d="M13 19.500H19L19.800 22.300H12.200z" fill="#b8935e" stroke="none" stroke-width="2" /><path d="M12 22.100H19.800L25.200 32.200H6.600z" fill="#f3cf7e" stroke="none" stroke-width="2" /></g><g transform="translate(20 1046.8)"><text x="6.8" y="58.6" font-family="Liberation Sans" font-size="76" font-weight="normal" fill="#d9d9d9" textLength="50.500" lengthAdjust="spacingAndGlyphs" stroke="#d9d9d9" stroke-width="2.200">A</text></g><g transform="translate(108 1046.8)"><text x="0.7" y="48.7" font-family="Liberation Sans" font-size="67.5" font-weight="normal" fill="#d9d9d9" textLength="43.500" lengthAdjust="spacingAndGlyphs" stroke="#d9d9d9" stroke-width="2">A</text><path d="M44 42 50 36 64 50 58 56z" fill="#3b4351" stroke="none" stroke-width="2" /><g transform="translate(26.500 31.500)"><path d="M23 9.500 27.500 14 24 18 19 13z" fill="#3b4351" stroke="none" stroke-width="2" /><g transform="translate(0 0) scale(1)"><path d="M24.500 10.500 33.300 1.700 38.300 6.700 29.500 15.500z" fill="#ececec" stroke="none" stroke-width="2" /><path d="M22.800 12.200 27.800 17.200C28 25.500 19.500 31.800 1.500 31.300 7.500 28.500 9.500 25 11.500 20.500 13.500 16 17.500 12.800 22.800 12.200z" fill="#d2ad78" stroke="none" stroke-width="2" /></g></g></g><g transform="translate(190 1039.8)"><text x="3.9" y="27.9" font-family="Liberation Sans" font-size="38" font-weight="normal" fill="#d9d9d9" textLength="24.400" lengthAdjust="spacingAndGlyphs" stroke="#d9d9d9" stroke-width=".8">A</text><path d="M0 31.3L32.2 31.3" stroke="#8cc6f7" stroke-width="2" fill="none" /></g><g transform="translate(234 1039.8)"><text x="0.8" y="11.8" font-family="Liberation Sans" font-size="12.8" font-weight="bold" fill="#d9d9d9" textLength="30.600" lengthAdjust="spacingAndGlyphs">ABC</text><path d="M5.7 22.7L13 29.6L25.8 16.5" stroke="#78d285" stroke-width="4.5" fill="none" /></g><g transform="translate(278 1039.8)"><rect x="8.1" y="24.2" width="23.9" height="7.8" fill="#d9d9d9" stroke="none" stroke-width="2" rx="0" /><rect x="8.1" y="14.2" width="23.9" height="7.7" fill="#8cc6f7" stroke="none" stroke-width="2" rx="0" /><rect x="-1" y="-0.8" width="20.2" height="19.8" fill="#3b4351" stroke="none" stroke-width="2" rx="0" /><rect x="0" y="0.2" width="18.2" height="17.8" fill="#f2f2f2" stroke="none" stroke-width="2" rx="0" /><rect x="3.64" y="3.906000000000001" width="2.6" height="2.2" fill="#2f7be0" stroke="none" stroke-width="2" rx="0" /><rect x="7.643999999999999" y="3.906000000000001" width="7.28" height="2.2" fill="#2f7be0" stroke="none" stroke-width="2" rx="0" /><rect x="3.64" y="8.0" width="2.6" height="2.2" fill="#2f7be0" stroke="none" stroke-width="2" rx="0" /><rect x="7.643999999999999" y="8.0" width="7.28" height="2.2" fill="#2f7be0" stroke="none" stroke-width="2" rx="0" /><rect x="3.64" y="12.094" width="2.6" height="2.2" fill="#2f7be0" stroke="none" stroke-width="2" rx="0" /><rect x="7.643999999999999" y="12.094" width="7.28" height="2.2" fill="#2f7be0" stroke="none" stroke-width="2" rx="0" /><text x="19.3" y="11.8" font-family="Liberation Sans" font-size="16.2" font-weight="bold" fill="#8cc6f7" >A</text></g><g transform="translate(322 1039.8)"><text x="1.8" y="10" font-family="Liberation Sans" font-size="10.6" font-weight="bold" fill="#d9d9d9" textLength="22" lengthAdjust="spacingAndGlyphs">PDF</text><path d="M5.300 15V21.800H9.500" fill="none" stroke="#fff" stroke-width="2.2" /><path transform="translate(14.5 21.8) rotate(0)" d="M0 0L-5.5 -3.5L-5.5 3.5z" fill="#fff"/><text x="15.5" y="30.1" font-family="Liberation Sans" font-size="21" font-weight="normal" fill="#8cc6f7" >A</text></g><g transform="translate(190 1084.3)"><rect x="0" y="0" width="22" height="23.5" fill="#d2d2d2" stroke="none" stroke-width="2" rx="0" /><path d="M4.100 4.500h14M4.100 8.400h14M4.100 12.200h14" fill="none" stroke="#5a5a5a" stroke-width="2" /><path d="M24.500 4H29V7.500" fill="none" stroke="#fff" stroke-width="2.2" /><path transform="translate(29 12.5) rotate(90)" d="M0 0L-5.5 -3.5L-5.5 3.5z" fill="#fff"/><path d="M12.500 33 22.500 11.500 33.500 33z" fill="#3b4351" stroke="none" stroke-width="2" /><text x="14" y="31.5" font-family="Liberation Sans" font-size="24.5" font-weight="normal" fill="#fff" >A</text></g><g transform="translate(234 1084.3)"><circle cx="13" cy="13" r="12.3" fill="none" stroke="#fff" stroke-width="2" /><text x="6.6" y="18.4" font-family="Liberation Sans" font-size="18" font-weight="normal" fill="#d9d9d9" >A</text><path d="M22.2 22.5L31 30.6" stroke="#d2ad78" stroke-width="3.2" fill="none" /></g><g transform="translate(278 1084.3)"><text x="1.5" y="11.9" font-family="Liberation Sans" font-size="16.2" font-weight="bold" fill="#8cc6f7" >A</text><rect x="0" y="23.8" width="24" height="7.7" fill="#d9d9d9" stroke="none" stroke-width="2" rx="0" /><rect x="0" y="13.8" width="24" height="7.7" fill="#8cc6f7" stroke="none" stroke-width="2" rx="0" /><circle cx="24" cy="7.6" r="9.2" fill="#3b4351" stroke="none" stroke-width="2" /><path d="M18 7.6A6 6 0 0 1 28.5 3.6399999999999997" fill="none" stroke="#78d285" stroke-width="2.6" /><path transform="translate(30.9 6.699999999999999) rotate(70)" d="M0 0L-5.699999999999999 -3.3000000000000003L-5.699999999999999 3.3000000000000003z" fill="#78d285"/><path d="M30 7.6A6 6 0 0 1 19.5 11.559999999999999" fill="none" stroke="#78d285" stroke-width="2.6" /><path transform="translate(17.1 8.5) rotate(250)" d="M0 0L-5.699999999999999 -3.3000000000000003L-5.699999999999999 3.3000000000000003z" fill="#78d285"/></g><g transform="translate(322 1084.3)"><text x="0" y="7.6" font-family="Liberation Sans" font-size="10.6" font-weight="bold" fill="#d9d9d9" textLength="21.600" lengthAdjust="spacingAndGlyphs">PDF</text><path d="M3.300 12.500V19.800H7.500" fill="none" stroke="#fff" stroke-width="2.2" /><path transform="translate(12.5 19.8) rotate(0)" d="M0 0L-5.5 -3.5L-5.5 3.5z" fill="#fff"/><text x="13.5" y="29" font-family="Liberation Sans" font-size="20" font-weight="normal" fill="#bdbdbd" font-style="italic">A</text><path d="M17.500 31 27 21.500" fill="none" stroke="#6aa9e8" stroke-width="3.2" /><path d="M25.500 18.500a4.500 4.500 0 0 0 6 5.500l-3-1-1-2.500 2-2a4.500 4.500 0 0 0-4 0z" fill="#6aa9e8" stroke="#6aa9e8" stroke-width="1.5" /></g><g transform="translate(20 1190.8)"><path d="M0.9 -0.9L0.9 63.3" stroke="#d9d9d9" stroke-width="2" fill="none" /><path d="M63 -0.9L63 63.3" stroke="#d9d9d9" stroke-width="2" fill="none" /><path d="M8.9 12.3L55 12.3" stroke="#d9d9d9" stroke-width="2" fill="none" /><path transform="translate(1.9 12.3) rotate(180)" d="M0 0L-8 -4.25L-8 4.25z" fill="#d9d9d9"/><path transform="translate(62 12.3) rotate(0)" d="M0 0L-8 -4.25L-8 4.25z" fill="#d9d9d9"/><path transform="translate(32 58.5) rotate(-90)" d="M11.500 -3 25.500 -1.200V1.200L11.500 3z" fill="#f3d27e"/><path transform="translate(32 58.5) rotate(-45)" d="M11.500 -3 25.500 -1.200V1.200L11.500 3z" fill="#f3d27e"/><path transform="translate(32 58.5) rotate(-135)" d="M11.500 -3 25.500 -1.200V1.200L11.500 3z" fill="#f3d27e"/><path transform="translate(32 58.5) rotate(0)" d="M11.500 -3 25.500 -1.200V1.200L11.500 3z" fill="#f3d27e"/><path transform="translate(32 58.5) rotate(180)" d="M11.500 -3 25.500 -1.200V1.200L11.500 3z" fill="#f3d27e"/></g><g transform="translate(108 1190.8)"><path d="M1 22.6L1 56.2" stroke="#d9d9d9" stroke-width="2" fill="none" /><path d="M62.9 22.6L62.9 56.2" stroke="#d9d9d9" stroke-width="2" fill="none" /><path d="M9 39.2L54.9 39.2" stroke="#d9d9d9" stroke-width="2" fill="none" /><path transform="translate(2 39.2) rotate(180)" d="M0 0L-8 -4.25L-8 4.25z" fill="#d9d9d9"/><path transform="translate(61.9 39.2) rotate(0)" d="M0 0L-8 -4.25L-8 4.25z" fill="#d9d9d9"/><g transform="translate(26.500 4.500)"><g transform="translate(0 0) scale(1)"><path d="M24.500 10.500 33.300 1.700 38.300 6.700 29.500 15.500z" fill="#ececec" stroke="none" stroke-width="2" /><path d="M22.800 12.200 27.800 17.200C28 25.500 19.500 31.800 1.500 31.300 7.500 28.500 9.500 25 11.500 20.500 13.500 16 17.500 12.800 22.800 12.200z" fill="#d2ad78" stroke="none" stroke-width="2" /></g></g></g><g transform="translate(190 1183.8)"><path d="M1 2.3L1 30.1" stroke="#d9d9d9" stroke-width="2" fill="none" /><path d="M31.2 2.3L31.2 30.1" stroke="#d9d9d9" stroke-width="2" fill="none" /><path d="M6 11.1L26.2 11.1" stroke="#8cc6f7" stroke-width="2" fill="none" /><path transform="translate(2 11.1) rotate(180)" d="M0 0L-5 -3.0L-5 3.0z" fill="#8cc6f7"/><path transform="translate(30.2 11.1) rotate(0)" d="M0 0L-5 -3.0L-5 3.0z" fill="#8cc6f7"/></g><path d="M228 1222.8h-7.500l7.500-7.500z" fill="#9b9b9b"/><g transform="translate(234 1183.8)"><circle cx="16.1" cy="16.2" r="12.2" fill="none" stroke="#d9d9d9" stroke-width="2" /><path d="M16.1 1L16.1 31.5" stroke="#8cc6f7" stroke-width="2" fill="none" stroke-dasharray="10.500 3 3.200 3"/><path d="M1 16.2L31 16.2" stroke="#8cc6f7" stroke-width="2" fill="none" stroke-dasharray="10.500 3 3.200 3"/><circle cx="28.1" cy="4.1" r="9.6" fill="#e5783c" stroke="#fff" stroke-width="1.6" /></g><path d="M272 1222.8h-7.500l7.500-7.500z" fill="#9b9b9b"/><g transform="translate(278 1183.8)"><path d="M13.1 0.2L13.1 25" stroke="#d9d9d9" stroke-width="2" fill="none" /><path transform="translate(13.1 29.5) rotate(90)" d="M0 0L-7.5 -4.0L-7.5 4.0z" fill="#d9d9d9"/><path d="M6.1 31.2L20 31.2" stroke="#d9d9d9" stroke-width="2" fill="none" /><path d="M0 13.4L9.7 13.4" stroke="#8cc6f7" stroke-width="2" fill="none" /><path d="M16.5 13.4L23 13.4" stroke="#8cc6f7" stroke-width="2" fill="none" /><path transform="translate(29.8 13.4) rotate(0)" d="M0 0L-8 -4.75L-8 4.75z" fill="#8cc6f7"/><path d="M31 6.1L31 20.4" stroke="#d9d9d9" stroke-width="2" fill="none" /></g><g transform="translate(322 1183.8)"><path d="M4.4 4.1L27.9 4.1" stroke="#d9d9d9" stroke-width="2" fill="none" /><path transform="translate(0.4 4.1) rotate(180)" d="M0 0L-5 -3.0L-5 3.0z" fill="#d9d9d9"/><path transform="translate(31.9 4.1) rotate(0)" d="M0 0L-5 -3.0L-5 3.0z" fill="#d9d9d9"/><path d="M4.4 28.1L27.9 28.1" stroke="#d9d9d9" stroke-width="2" fill="none" /><path transform="translate(0.4 28.1) rotate(180)" d="M0 0L-5 -3.0L-5 3.0z" fill="#d9d9d9"/><path transform="translate(31.9 28.1) rotate(0)" d="M0 0L-5 -3.0L-5 3.0z" fill="#d9d9d9"/><rect x="12" y="7.2" width="8.2" height="17.8" fill="#f3cf7e" stroke="none" stroke-width="2" rx="0" /><path d="M12 10.500h3M12 14h4M12 17.500h3M12 21h4" fill="none" stroke="#b8935e" stroke-width="1.2" /></g><g transform="translate(190 1228.3)"><path d="M1.8 1.7L1.8 29.7" stroke="#d9d9d9" stroke-width="2" fill="none" /><path d="M16 1.7L16 29.7" stroke="#d9d9d9" stroke-width="2" fill="none" /><path d="M29.9 12L29.9 29.7" stroke="#d9d9d9" stroke-width="2" fill="none" /><path d="M6.4 11L11.399999999999999 11" stroke="#8cc6f7" stroke-width="2" fill="none" /><path transform="translate(3.2 11) rotate(180)" d="M0 0L-4.2 -2.75L-4.2 2.75z" fill="#8cc6f7"/><path transform="translate(14.6 11) rotate(0)" d="M0 0L-4.2 -2.75L-4.2 2.75z" fill="#8cc6f7"/><path d="M20.7 11L20.8 11" stroke="#8cc6f7" stroke-width="2" fill="none" /><path transform="translate(17.5 11) rotate(180)" d="M0 0L-4.2 -2.75L-4.2 2.75z" fill="#8cc6f7"/><path transform="translate(24 11) rotate(0)" d="M0 0L-4.2 -2.75L-4.2 2.75z" fill="#8cc6f7"/><circle cx="28.1" cy="3.7" r="9.6" fill="#e5783c" stroke="#fff" stroke-width="1.6" /></g><path d="M228 1267.3h-7.500l7.500-7.500z" fill="#9b9b9b"/><g transform="translate(234 1228.3)"><rect x="1.6" y="5.2" width="29.1" height="20.7" fill="none" stroke="#d9d9d9" stroke-width="2.2" rx="0" /><path d="M16.9 5.2L16.9 25.9" stroke="#d9d9d9" stroke-width="2" fill="none" /><circle cx="8.8" cy="16.1" r="4" fill="none" stroke="#fff" stroke-width="1.8" /><path d="M8.8 9.5L8.8 22.7" stroke="#fff" stroke-width="1.8" fill="none" /><path d="M2.3 16.1L15.3 16.1" stroke="#fff" stroke-width="1.8" fill="none" /><text x="18.2" y="22.3" font-family="Liberation Sans" font-size="13.5" font-weight="normal" fill="#fff" >.1</text></g><g transform="translate(278 1228.3)"><path d="M0.9 -0.2L0.9 31.5" stroke="#d9d9d9" stroke-width="2" fill="none" /><path d="M31 -0.2L31 31.5" stroke="#d9d9d9" stroke-width="2" fill="none" /><path d="M5.9 6.8L26 6.8" stroke="#d9d9d9" stroke-width="2" fill="none" /><path transform="translate(1.9 6.8) rotate(180)" d="M0 0L-5 -3.0L-5 3.0z" fill="#d9d9d9"/><path transform="translate(30 6.8) rotate(0)" d="M0 0L-5 -3.0L-5 3.0z" fill="#d9d9d9"/><path d="M9.7 23.8L15.1 28.5L22.8 19.6" stroke="#78d285" stroke-width="4" fill="none" /></g><g transform="translate(322 1228.3)"><path d="M0.4 11.4L11.7 0.6" stroke="#d9d9d9" stroke-width="2" fill="none" /><path d="M20.5 31.1L31.8 20.7" stroke="#d9d9d9" stroke-width="2" fill="none" /><path d="M10.5 10.5L22.5 22" stroke="#d9d9d9" stroke-width="2" fill="none" /><path transform="translate(7.4 7.6) rotate(224)" d="M0 0L-5.5 -3.25L-5.5 3.25z" fill="#d9d9d9"/><path transform="translate(25.1 24.6) rotate(44)" d="M0 0L-5.5 -3.25L-5.5 3.25z" fill="#d9d9d9"/><text x="17.8" y="13" font-family="Liberation Sans" font-size="12.5" font-weight="bold" fill="#8cc6f7" >X</text></g><path d="M360 1267.3h-7.500l7.500-7.500z" fill="#9b9b9b"/><g transform="translate(20 1334.8)"><circle cx="49.1" cy="16.1" r="14.2" fill="none" stroke="#d9d9d9" stroke-width="2" /><path d="M35 16.1L25.2 16.1L3.2 54.3" stroke="#d9d9d9" stroke-width="2" fill="none" /><path d="M0.100 48.100 11.700 54.800 0.100 61.300z" fill="#d9d9d9" stroke="none" stroke-width="2" /><circle cx="65.8" cy="-2.9" r="9.6" fill="#e5783c" stroke="#fff" stroke-width="1.6" /></g><g transform="translate(108 1334.8)"><circle cx="49" cy="16.1" r="14.2" fill="none" stroke="#d9d9d9" stroke-width="2" /><path d="M35 16.1L25.2 16.1L3.2 54.3" stroke="#d9d9d9" stroke-width="2" fill="none" /><path d="M0.100 48.100 11.700 54.800 0.100 61.300z" fill="#d9d9d9" stroke="none" stroke-width="2" /><g transform="translate(26.500 31.500)"><g transform="translate(0 0) scale(1)"><path d="M24.500 10.500 33.300 1.700 38.300 6.700 29.500 15.500z" fill="#ececec" stroke="none" stroke-width="2" /><path d="M22.800 12.200 27.800 17.200C28 25.500 19.500 31.800 1.500 31.300 7.500 28.500 9.500 25 11.500 20.500 13.500 16 17.500 12.800 22.800 12.200z" fill="#d2ad78" stroke="none" stroke-width="2" /></g></g></g><g transform="translate(190 1327.8)"><path d="M8 0.300v16M0 8.300h16" fill="none" stroke="#78d285" stroke-width="4.5" /><circle cx="27" cy="15.2" r="4.3" fill="none" stroke="#d9d9d9" stroke-width="1.8" /><path d="M22.7 15.2L16.5 15.2L8 28.5" stroke="#d9d9d9" stroke-width="1.8" fill="none" /><path d="M16.5 15.2L24 28.5" stroke="#d9d9d9" stroke-width="1.8" fill="none" /><path transform="translate(6.2 31.5) rotate(120)" d="M0 0L-6 -3.0L-6 3.0z" fill="#d9d9d9"/><path transform="translate(25.7 31.5) rotate(60)" d="M0 0L-6 -3.0L-6 3.0z" fill="#d9d9d9"/></g><g transform="translate(234 1327.8)"><circle cx="23" cy="5.2" r="3.9" fill="none" stroke="#d9d9d9" stroke-width="1.8" /><path d="M19.1 5.2L6.5 5.2L2.5 13.5" stroke="#d9d9d9" stroke-width="1.8" fill="none" /><path transform="translate(0.8 17.5) rotate(113)" d="M0 0L-6.5 -3.25L-6.5 3.25z" fill="#d9d9d9"/><circle cx="23" cy="17.6" r="3.9" fill="none" stroke="#d9d9d9" stroke-width="1.8" /><path d="M19.1 17.6L13.5 17.6L6.5 28" stroke="#d9d9d9" stroke-width="1.8" fill="none" /><path transform="translate(4.8 31.5) rotate(120)" d="M0 0L-6.5 -3.25L-6.5 3.25z" fill="#d9d9d9"/><path d="M31.1 0.2L31.1 32" stroke="#8cc6f7" stroke-width="2" fill="none" /></g><g transform="translate(278 1327.8)"><circle cx="25.4" cy="9.1" r="5.9" fill="none" stroke="#d9d9d9" stroke-width="2" /><path d="M19.6 9.1L12.4 9.1L3 25.5" stroke="#d9d9d9" stroke-width="2" fill="none" /><path transform="translate(1 29.8) rotate(120)" d="M0 0L-8 -4.0L-8 4.0z" fill="#d9d9d9"/><g transform="translate(16.6 17.1) scale(0.98)"><path d="M11 0 0 8.500 6.500 9 3 15.500 15 6 8.500 6z" fill="#f3d27e" stroke="none" stroke-width="2" /></g></g><g transform="translate(190 1372.3)"><path d="M1.500 1.300 12.300 12.300M12.300 1.300 1.500 12.300" fill="none" stroke="#e2686a" stroke-width="4.2" /><circle cx="27" cy="15.2" r="4.3" fill="none" stroke="#d9d9d9" stroke-width="1.8" /><path d="M22.7 15.2L16.5 15.2L8 28.5" stroke="#d9d9d9" stroke-width="1.8" fill="none" /><path d="M16.5 15.2L24 28.5" stroke="#d9d9d9" stroke-width="1.8" fill="none" /><path transform="translate(6.2 31.5) rotate(120)" d="M0 0L-6 -3.0L-6 3.0z" fill="#d9d9d9"/><path transform="translate(25.7 31.5) rotate(60)" d="M0 0L-6 -3.0L-6 3.0z" fill="#d9d9d9"/></g><g transform="translate(234 1372.3)"><circle cx="25" cy="8.8" r="6.2" fill="none" stroke="#d9d9d9" stroke-width="2" /><circle cx="25" cy="23" r="6.2" fill="none" stroke="#d9d9d9" stroke-width="2" /><path d="M18.9 8.8L11.9 8.8L3 24.5" stroke="#d9d9d9" stroke-width="2" fill="none" /><path transform="translate(1 28.8) rotate(120)" d="M0 0L-8 -4.0L-8 4.0z" fill="#d9d9d9"/></g><g transform="translate(20 1478.8)"><rect x="1.7" y="4.9" width="60.699999999999996" height="52.800000000000004" fill="none" stroke="#d9d9d9" stroke-width="2" rx="0" /><path d="M1.7 21.1L62.4 21.1" stroke="#d9d9d9" stroke-width="2" fill="none" /><path d="M1.7 33.5L62.4 33.5" stroke="#d9d9d9" stroke-width="2" fill="none" /><path d="M1.7 45.5L62.4 45.5" stroke="#d9d9d9" stroke-width="2" fill="none" /><path d="M21.8 21.1L21.8 57.7" stroke="#d9d9d9" stroke-width="2" fill="none" /><path d="M41.9 21.1L41.9 57.7" stroke="#d9d9d9" stroke-width="2" fill="none" /></g><g transform="translate(108 1478.8)"><rect x="0.7" y="-0.2" width="54.8" height="53.0" fill="none" stroke="#d9d9d9" stroke-width="2" rx="0" /><path d="M0.7 16L55.5 16" stroke="#d9d9d9" stroke-width="2" fill="none" /><path d="M0.7 28L55.5 28" stroke="#d9d9d9" stroke-width="2" fill="none" /><path d="M0.7 40.4L55.5 40.4" stroke="#d9d9d9" stroke-width="2" fill="none" /><path d="M19.1 16L19.1 52.8" stroke="#d9d9d9" stroke-width="2" fill="none" /><path d="M36.9 16L36.9 52.8" stroke="#d9d9d9" stroke-width="2" fill="none" /><g transform="translate(26.500 31.500)"><path d="M22 8.500 29.500 1 39 10.500 31.500 18 24.500 19 20.500 14.500z" fill="#3b4351" stroke="none" stroke-width="2" /><g transform="translate(0 0) scale(1)"><path d="M24.500 10.500 33.300 1.700 38.300 6.700 29.500 15.500z" fill="#ececec" stroke="none" stroke-width="2" /><path d="M22.800 12.200 27.800 17.200C28 25.500 19.500 31.800 1.500 31.300 7.500 28.500 9.500 25 11.500 20.500 13.500 16 17.500 12.800 22.800 12.200z" fill="#d2ad78" stroke="none" stroke-width="2" /></g></g></g><g transform="translate(190 1471.8)"><path d="M0 4.1H24L32 12.1V28.0H0z" fill="#d4d4d4" stroke="none" stroke-width="2" /><path d="M24 4.1L32 12.1H24z" fill="#f2f2f2" stroke="none" stroke-width="2" /><rect x="6.5" y="9" width="13" height="11" fill="#9c9c9c" stroke="none" stroke-width="2" rx="0" /><rect x="7.7" y="10.5" width="2.8" height="1.8" fill="#d4d4d4" stroke="none" stroke-width="2" rx="0" /><rect x="11.7" y="10.5" width="2.8" height="1.8" fill="#d4d4d4" stroke="none" stroke-width="2" rx="0" /><rect x="15.7" y="10.5" width="2.8" height="1.8" fill="#d4d4d4" stroke="none" stroke-width="2" rx="0" /><rect x="7.7" y="13.7" width="2.8" height="1.8" fill="#d4d4d4" stroke="none" stroke-width="2" rx="0" /><rect x="11.7" y="13.7" width="2.8" height="1.8" fill="#d4d4d4" stroke="none" stroke-width="2" rx="0" /><rect x="15.7" y="13.7" width="2.8" height="1.8" fill="#d4d4d4" stroke="none" stroke-width="2" rx="0" /><rect x="7.7" y="16.9" width="2.8" height="1.8" fill="#d4d4d4" stroke="none" stroke-width="2" rx="0" /><rect x="11.7" y="16.9" width="2.8" height="1.8" fill="#d4d4d4" stroke="none" stroke-width="2" rx="0" /><rect x="15.7" y="16.9" width="2.8" height="1.8" fill="#d4d4d4" stroke="none" stroke-width="2" rx="0" /><rect x="12.8" y="15.3" width="20" height="17.5" fill="#3b4351" stroke="none" stroke-width="2" rx="0" /><rect x="14.1" y="16.5" width="18.1" height="15.5" fill="#f2f2f2" stroke="none" stroke-width="2" rx="0" /><rect x="14.1" y="16.5" width="18.1" height="3.6" fill="#9a9a9a" stroke="none" stroke-width="2" rx="0" /><path d="M17.500 24h2M21.500 24h7.500M17.500 28h2M21.500 28h7.500" fill="none" stroke="#5a5a5a" stroke-width="1.8" /><rect x="-1" y="-1" width="10" height="20" fill="#3b4351" stroke="none" stroke-width="2" rx="0" opacity=".0"/><g transform="translate(0 0.3)"><ellipse cx="4" cy="5" rx="3.1" ry="4.3" fill="none" stroke="#f0b57f" stroke-width="2.2" /><ellipse cx="4" cy="13.5" rx="3.1" ry="4.3" fill="none" stroke="#f0b57f" stroke-width="2.2" /><rect x="2.9" y="6.5" width="2.2" height="5.5" fill="#3b4351" stroke="none" stroke-width="2" rx="0" /><path d="M4 6L4 12.5" stroke="#f0b57f" stroke-width="0" fill="none" /></g></g><g transform="translate(234 1471.8)"><path d="M0 2.3H24L32 10.3V26.2H0z" fill="#d4d4d4" stroke="none" stroke-width="2" /><path d="M24 2.3L32 10.3H24z" fill="#f2f2f2" stroke="none" stroke-width="2" /><rect x="7" y="7.5" width="13" height="11" fill="#9c9c9c" stroke="none" stroke-width="2" rx="0" /><rect x="8.2" y="9.0" width="2.8" height="1.8" fill="#d4d4d4" stroke="none" stroke-width="2" rx="0" /><rect x="12.2" y="9.0" width="2.8" height="1.8" fill="#d4d4d4" stroke="none" stroke-width="2" rx="0" /><rect x="16.2" y="9.0" width="2.8" height="1.8" fill="#d4d4d4" stroke="none" stroke-width="2" rx="0" /><rect x="8.2" y="12.2" width="2.8" height="1.8" fill="#d4d4d4" stroke="none" stroke-width="2" rx="0" /><rect x="12.2" y="12.2" width="2.8" height="1.8" fill="#d4d4d4" stroke="none" stroke-width="2" rx="0" /><rect x="16.2" y="12.2" width="2.8" height="1.8" fill="#d4d4d4" stroke="none" stroke-width="2" rx="0" /><rect x="8.2" y="15.4" width="2.8" height="1.8" fill="#d4d4d4" stroke="none" stroke-width="2" rx="0" /><rect x="12.2" y="15.4" width="2.8" height="1.8" fill="#d4d4d4" stroke="none" stroke-width="2" rx="0" /><rect x="16.2" y="15.4" width="2.8" height="1.8" fill="#d4d4d4" stroke="none" stroke-width="2" rx="0" /><path d="M18 13h10v8h5.500l-10.500 12-10.500-12h5.500z" fill="#3b4351" stroke="none" stroke-width="2" /><path d="M20 14.500h6.500v8h4.500l-7.750 9.500-7.750-9.500h4.500z" fill="#7dbdf5" stroke="none" stroke-width="2" /><g transform="translate(0 0.3)"><ellipse cx="4" cy="5" rx="3.1" ry="4.3" fill="none" stroke="#f0b57f" stroke-width="2.2" /><ellipse cx="4" cy="13.5" rx="3.1" ry="4.3" fill="none" stroke="#f0b57f" stroke-width="2.2" /><rect x="2.9" y="6.5" width="2.2" height="5.5" fill="#3b4351" stroke="none" stroke-width="2" rx="0" /><path d="M4 6L4 12.5" stroke="#f0b57f" stroke-width="0" fill="none" /></g></g><g transform="translate(190 1516.3)"><rect x="8" y="23.8" width="24.2" height="7.7" fill="#d9d9d9" stroke="none" stroke-width="2" rx="0" /><rect x="8" y="13.8" width="24.2" height="8" fill="#8cc6f7" stroke="none" stroke-width="2" rx="0" /><rect x="-1" y="-1" width="20" height="19.6" fill="#3b4351" stroke="none" stroke-width="2" rx="0" /><rect x="0" y="0" width="18" height="17.6" fill="#f2f2f2" stroke="none" stroke-width="2" rx="0" /><rect x="3.6" y="3.6520000000000006" width="2.6" height="2.2" fill="#2f7be0" stroke="none" stroke-width="2" rx="0" /><rect x="7.56" y="3.6520000000000006" width="7.2" height="2.2" fill="#2f7be0" stroke="none" stroke-width="2" rx="0" /><rect x="3.6" y="7.700000000000001" width="2.6" height="2.2" fill="#2f7be0" stroke="none" stroke-width="2" rx="0" /><rect x="7.56" y="7.700000000000001" width="7.2" height="2.2" fill="#2f7be0" stroke="none" stroke-width="2" rx="0" /><rect x="3.6" y="11.748000000000001" width="2.6" height="2.2" fill="#2f7be0" stroke="none" stroke-width="2" rx="0" /><rect x="7.56" y="11.748000000000001" width="7.2" height="2.2" fill="#2f7be0" stroke="none" stroke-width="2" rx="0" /><text x="19.8" y="12" font-family="Liberation Sans" font-size="16.2" font-weight="bold" fill="#8cc6f7" >A</text></g><g transform="translate(234 1516.3)"><path d="M0 16H8L11 8.400H20L23 12H29L32 16V31.500H0z" fill="#d4d4d4" stroke="none" stroke-width="2" /><rect x="6.5" y="17" width="13" height="11" fill="#9c9c9c" stroke="none" stroke-width="2" rx="0" /><rect x="7.7" y="18.5" width="2.8" height="1.8" fill="#d4d4d4" stroke="none" stroke-width="2" rx="0" /><rect x="11.7" y="18.5" width="2.8" height="1.8" fill="#d4d4d4" stroke="none" stroke-width="2" rx="0" /><rect x="15.7" y="18.5" width="2.8" height="1.8" fill="#d4d4d4" stroke="none" stroke-width="2" rx="0" /><rect x="7.7" y="21.7" width="2.8" height="1.8" fill="#d4d4d4" stroke="none" stroke-width="2" rx="0" /><rect x="11.7" y="21.7" width="2.8" height="1.8" fill="#d4d4d4" stroke="none" stroke-width="2" rx="0" /><rect x="15.7" y="21.7" width="2.8" height="1.8" fill="#d4d4d4" stroke="none" stroke-width="2" rx="0" /><rect x="7.7" y="24.9" width="2.8" height="1.8" fill="#d4d4d4" stroke="none" stroke-width="2" rx="0" /><rect x="11.7" y="24.9" width="2.8" height="1.8" fill="#d4d4d4" stroke="none" stroke-width="2" rx="0" /><rect x="15.7" y="24.9" width="2.8" height="1.8" fill="#d4d4d4" stroke="none" stroke-width="2" rx="0" /><circle cx="24" cy="6" r="9.2" fill="#3b4351" stroke="none" stroke-width="2" /><path d="M17.8 6A6.2 6.2 0 0 1 28.65 1.9079999999999995" fill="none" stroke="#78d285" stroke-width="2.6" /><path transform="translate(31.13 5.07) rotate(70)" d="M0 0L-5.89 -3.4100000000000006L-5.89 3.4100000000000006z" fill="#78d285"/><path d="M30.2 6A6.2 6.2 0 0 1 19.35 10.092" fill="none" stroke="#78d285" stroke-width="2.6" /><path transform="translate(16.87 6.93) rotate(250)" d="M0 0L-5.89 -3.4100000000000006L-5.89 3.4100000000000006z" fill="#78d285"/><g transform="translate(0 0)"><ellipse cx="4" cy="5" rx="3.1" ry="4.3" fill="none" stroke="#f0b57f" stroke-width="2.2" /><ellipse cx="4" cy="13.5" rx="3.1" ry="4.3" fill="none" stroke="#f0b57f" stroke-width="2.2" /><rect x="2.9" y="6.5" width="2.2" height="5.5" fill="#3b4351" stroke="none" stroke-width="2" rx="0" /><path d="M4 6L4 12.5" stroke="#f0b57f" stroke-width="0" fill="none" /></g></g><g transform="translate(20 1622.8)"><path d="M2.9 -0.9L2.9 55.1" stroke="#e2686a" stroke-width="2.2" fill="none" /><rect x="0.1" y="57.4" width="5.9" height="5.9" fill="#e2686a" stroke="none" stroke-width="2" rx="0" /><path d="M7.8 60L64 60" stroke="#d9d9d9" stroke-width="2.2" fill="none" /></g><path d="M94 1695.8h-7.500l7.500-7.500z" fill="#9b9b9b"/><g transform="translate(102 1615.8)"><rect x="0" y="14.2" width="12.4" height="9.7" fill="#d9d9d9" stroke="none" stroke-width="2" rx="0" /><rect x="14" y="0.2" width="12" height="9.8" fill="#8cc6f7" stroke="none" stroke-width="2" rx="0" /><path d="M12.9 0.2L12.9 23.9" stroke="#e2686a" stroke-width="2" fill="none" /><g transform="translate(16.5 16.3) scale(1.0)"><path d="M11 0 0 8.500 6.500 9 3 15.500 15 6 8.500 6z" fill="#f3d27e" stroke="none" stroke-width="2" /></g></g><g transform="translate(146 1615.8)"><path d="M6 1.600H1.200V26.900H6" fill="none" stroke="#fff" stroke-width="2" /><path d="M22.300 1.600H27V13.400" fill="none" stroke="#fff" stroke-width="2" /><path d="M13 15.7L21.5 6.9" stroke="#c8c8c8" stroke-width="2" fill="none" /><path d="M6.3 11.1L17.5 21.9" stroke="#e2686a" stroke-width="2" fill="none" /><circle cx="26" cy="21.1" r="5.6" fill="#f3d27e" stroke="none" stroke-width="2" /><path d="M23 27.3h6v1.500a3 3 0 0 1-6 0z" fill="#f2f2f2" stroke="none" stroke-width="2" /></g><g transform="translate(102 1660.3)"><path d="M6 1.600H1.200V26.900H6" fill="none" stroke="#fff" stroke-width="2" /><path d="M22.300 1.600H27V13.400" fill="none" stroke="#fff" stroke-width="2" /><path d="M13 15.7L21.5 6.9" stroke="#c8c8c8" stroke-width="2" fill="none" /><path d="M6.3 11.1L17.5 21.9" stroke="#e2686a" stroke-width="2" fill="none" /><circle cx="25.6" cy="21.1" r="5.6" fill="#f3d27e" stroke="none" stroke-width="2" /><path d="M25.6 15.500000000000002A5.600 5.600 0 0 1 25.6 26.700000000000003z" fill="#8bd8e0" stroke="none" stroke-width="2" /><path d="M22.6 27.3h6v1.500a3 3 0 0 1-6 0z" fill="#f2f2f2" stroke="none" stroke-width="2" /></g><g transform="translate(146 1660.3)"><path d="M6 1.600H1.200V26.900H6" fill="none" stroke="#fff" stroke-width="2" /><path d="M22.300 1.600H27V13.400" fill="none" stroke="#fff" stroke-width="2" /><path d="M13 15.7L21.5 6.9" stroke="#c8c8c8" stroke-width="2" fill="none" /><path d="M6.3 11.1L17.5 21.9" stroke="#e2686a" stroke-width="2" fill="none" /><circle cx="26" cy="21.1" r="5.6" fill="#8bd8e0" stroke="none" stroke-width="2" /><path d="M23 27.3h6v1.500a3 3 0 0 1-6 0z" fill="#f2f2f2" stroke="none" stroke-width="2" /></g><g transform="translate(196 1622.8)"><path d="M0.9 -0.9L0.9 63.3" stroke="#d9d9d9" stroke-width="2" fill="none" /><path d="M63 -0.9L63 63.3" stroke="#d9d9d9" stroke-width="2" fill="none" /><path d="M8.9 12.3L55 12.3" stroke="#d9d9d9" stroke-width="2" fill="none" /><path transform="translate(1.9 12.3) rotate(180)" d="M0 0L-8 -4.25L-8 4.25z" fill="#d9d9d9"/><path transform="translate(62 12.3) rotate(0)" d="M0 0L-8 -4.25L-8 4.25z" fill="#d9d9d9"/><path d="M22.800 40V33.500a9.300 9.300 0 0 1 18.600 0V40h-4.600V33.500a4.700 4.700 0 0 0-9.400 0V40z" fill="#f3d27e" stroke="none" stroke-width="2" /><rect x="18.9" y="39.2" width="26" height="20.1" fill="#f3d27e" stroke="none" stroke-width="2" rx="0" /><rect x="31" y="45" width="2.2" height="7.5" fill="#5b5140" stroke="none" stroke-width="2" rx="0" /></g><path d="M270 1695.8h-7.500l7.500-7.500z" fill="#9b9b9b"/><g transform="translate(278 1615.8)"><path d="M0.9 0.2L0.9 32" stroke="#d9d9d9" stroke-width="2" fill="none" /><path d="M31 0.2L31 32" stroke="#d9d9d9" stroke-width="2" fill="none" /><path d="M5.9 7.2L26 7.2" stroke="#d9d9d9" stroke-width="2" fill="none" /><path transform="translate(1.9 7.2) rotate(180)" d="M0 0L-5 -3.0L-5 3.0z" fill="#d9d9d9"/><path transform="translate(30 7.2) rotate(0)" d="M0 0L-5 -3.0L-5 3.0z" fill="#d9d9d9"/><path d="M11.500 25.500A6 6 0 0 1 13.500 17" fill="none" stroke="#6aa9e8" stroke-width="2.6" /><path transform="translate(16.8 15.2) rotate(-20)" d="M0 0L-5 -3.25L-5 3.25z" fill="#6aa9e8"/><path d="M20.500 18A6 6 0 0 1 18.500 26.500" fill="none" stroke="#e2686a" stroke-width="2.6" /><path transform="translate(15.2 28.3) rotate(160)" d="M0 0L-5 -3.25L-5 3.25z" fill="#e2686a"/></g><g transform="translate(322 1615.8)"><path d="M0.9 0.2L0.9 32" stroke="#d9d9d9" stroke-width="2" fill="none" /><path d="M27.2 0.2L27.2 13.5" stroke="#d9d9d9" stroke-width="2" fill="none" /><path d="M5.9 7.2L22.2 7.2" stroke="#d9d9d9" stroke-width="2" fill="none" /><path transform="translate(1.9 7.2) rotate(180)" d="M0 0L-5 -3.0L-5 3.0z" fill="#d9d9d9"/><path transform="translate(26.2 7.2) rotate(0)" d="M0 0L-5 -3.0L-5 3.0z" fill="#d9d9d9"/><circle cx="26" cy="21.1" r="5.6" fill="#f3d27e" stroke="none" stroke-width="2" /><path d="M23 27.3h6v1.500a3 3 0 0 1-6 0z" fill="#f2f2f2" stroke="none" stroke-width="2" /></g><g transform="translate(278 1660.3)"><path d="M0.9 0.2L0.9 32" stroke="#d9d9d9" stroke-width="2" fill="none" /><path d="M27 0.2L27 13.5" stroke="#d9d9d9" stroke-width="2" fill="none" /><path d="M5.9 7.2L22 7.2" stroke="#d9d9d9" stroke-width="2" fill="none" /><path transform="translate(1.9 7.2) rotate(180)" d="M0 0L-5 -3.0L-5 3.0z" fill="#d9d9d9"/><path transform="translate(26 7.2) rotate(0)" d="M0 0L-5 -3.0L-5 3.0z" fill="#d9d9d9"/><circle cx="25.4" cy="21.1" r="5.6" fill="#f3d27e" stroke="none" stroke-width="2" /><path d="M25.4 15.500000000000002A5.600 5.600 0 0 1 25.4 26.700000000000003z" fill="#8bd8e0" stroke="none" stroke-width="2" /><path d="M22.4 27.3h6v1.500a3 3 0 0 1-6 0z" fill="#f2f2f2" stroke="none" stroke-width="2" /></g><g transform="translate(322 1660.3)"><path d="M0.9 0.2L0.9 32" stroke="#d9d9d9" stroke-width="2" fill="none" /><path d="M27.2 0.2L27.2 13.5" stroke="#d9d9d9" stroke-width="2" fill="none" /><path d="M5.9 7.2L22.2 7.2" stroke="#d9d9d9" stroke-width="2" fill="none" /><path transform="translate(1.9 7.2) rotate(180)" d="M0 0L-5 -3.0L-5 3.0z" fill="#d9d9d9"/><path transform="translate(26.2 7.2) rotate(0)" d="M0 0L-5 -3.0L-5 3.0z" fill="#d9d9d9"/><circle cx="26" cy="21.1" r="5.6" fill="#8bd8e0" stroke="none" stroke-width="2" /><path d="M23 27.3h6v1.500a3 3 0 0 1-6 0z" fill="#f2f2f2" stroke="none" stroke-width="2" /></g><path d="M42 1777v22M31 1788h22" stroke="#e4e4e4" stroke-width="2.200"/><path d="M93 1779h21.200M93 1785h21.200M93 1797h21.200" stroke="#e4e4e4" stroke-width="2.200"/><rect x="88" y="1789" width="18" height="4.200" fill="#dedede"/><path d="M108 1792.200h6.200l-3.100-4z" fill="#dedede"/></svg><div class="abs" style="left:368px;top:1762px;width:2656px;height:48px;background:#3a4250;border-top:2px solid #272c36;"></div><div class="abs" style="left:370px;top:1764px;width:118px;height:45px;background:#4b566b;"></div><div class="abs" style="left:488.2px;top:1764px;width:1.8px;height:45px;background:#272c36;"></div><div class="abs" style="left:534.2px;top:1764px;width:1.8px;height:45px;background:#272c36;"></div><div class="abs" style="left:652.2px;top:1764px;width:1.8px;height:45px;background:#272c36;"></div><span class="t" style="left:394.5px;top:1775.4px;font-size:23px;color:#f4f4f4;letter-spacing:0.069px;-webkit-text-stroke:.75px #f4f4f4;">Model</span><span class="t" style="left:568.5px;top:1775.4px;font-size:23px;color:#a0a3aa;letter-spacing:-0.012px;">a3rd</span><div class="abs" style="left:1963.5px;top:1764px;width:2.5px;height:45px;background:#272c36;"></div><span class="t" style="left:1974.0px;top:1774.9px;font-size:23.5px;color:#c2c2c2;letter-spacing:0.313px;white-space:pre;">-4.6474,  28.3256, 0.0000</span><span class="t" style="left:2870.0px;top:1775.1px;font-size:23px;color:#b5b5b5;letter-spacing:-1.995px;">1:1</span><svg style="left:0;top:0" width="3024" height="1964" viewBox="0 0 3024 1964"><path d="M512.100 1775.700v21M501.600 1786.200h21" stroke="#dcdcdc" stroke-width="2"/><path d="M2269.7 1771.1L2269.7 1801" stroke="#dcdcdc" stroke-width="2" fill="none" /><path d="M2277.9 1771.1L2277.9 1801" stroke="#dcdcdc" stroke-width="2" fill="none" /><path d="M2286 1771.1L2286 1801" stroke="#dcdcdc" stroke-width="2" fill="none" /><path d="M2263.1 1777.2L2292.9 1777.2" stroke="#dcdcdc" stroke-width="2" fill="none" /><path d="M2263.1 1785.9L2292.9 1785.9" stroke="#dcdcdc" stroke-width="2" fill="none" /><path d="M2263.1 1794.4L2292.9 1794.4" stroke="#dcdcdc" stroke-width="2" fill="none" /><rect x="2309.9" y="1774.0" width="4" height="4" fill="#dcdcdc"/><rect x="2309.9" y="1783.9" width="4" height="4" fill="#dcdcdc"/><rect x="2309.9" y="1793.7" width="4" height="4" fill="#dcdcdc"/><rect x="2320.1" y="1774.0" width="4" height="4" fill="#dcdcdc"/><rect x="2320.1" y="1783.9" width="4" height="4" fill="#dcdcdc"/><rect x="2320.1" y="1793.7" width="4" height="4" fill="#dcdcdc"/><rect x="2330.3" y="1774.0" width="4" height="4" fill="#dcdcdc"/><rect x="2330.3" y="1783.9" width="4" height="4" fill="#dcdcdc"/><rect x="2330.3" y="1793.7" width="4" height="4" fill="#dcdcdc"/><path d="M2351.300 1770.200V1801H2381.900" fill="none" stroke="#dcdcdc" stroke-width="2" /><path d="M2351.300 1791H2361.400V1801" fill="none" stroke="#dcdcdc" stroke-width="2" /><circle cx="2407.6" cy="1786.2" r="13.1" fill="none" stroke="#dcdcdc" stroke-width="2" /><path d="M2426.200 1786.200H2407.600L2421.500 1772" fill="none" stroke="#dcdcdc" stroke-width="2" /><path d="M2445 1774v14M2438 1781h14" fill="none" stroke="#dcdcdc" stroke-width="2" /><rect x="2450.2" y="1790" width="19.7" height="8" fill="#dcdcdc" stroke="none" stroke-width="2" rx="0" /><rect x="2452" y="1792" width="1.5" height="4" fill="#3b4351" stroke="none" stroke-width="2" rx="0" /><rect x="2482.2" y="1773" width="15.5" height="4" fill="#dcdcdc" stroke="none" stroke-width="2" rx="0" /><rect x="2482.2" y="1781.5" width="15.5" height="5" fill="#dcdcdc" stroke="none" stroke-width="2" rx="0" /><rect x="2482.2" y="1790.5" width="15.5" height="8" fill="#dcdcdc" stroke="none" stroke-width="2" rx="0" /><path d="M2482.200 1773.800H2513.800M2482.200 1782.300H2513.800M2482.200 1791.300H2513.800" fill="none" stroke="#dcdcdc" stroke-width="1.6" /><rect x="2522" y="1766" width="40" height="40" fill="#6a8dc0" stroke="none" stroke-width="2" rx="0" /><rect x="2566" y="1766" width="40" height="40" fill="#6a8dc0" stroke="none" stroke-width="2" rx="0" /><rect x="2742" y="1766" width="40" height="40" fill="#6a8dc0" stroke="none" stroke-width="2" rx="0" /><rect x="2529.6" y="1773.3" width="25" height="25.7" fill="none" stroke="#fff" stroke-width="2" rx="0" /><rect x="2532.1" y="1775.8" width="4" height="4.14" fill="#fff" stroke="none" stroke-width="2" rx="0" /><rect x="2532.1" y="1784.08" width="4" height="4.14" fill="#fff" stroke="none" stroke-width="2" rx="0" /><rect x="2532.1" y="1792.36" width="4" height="4.14" fill="#fff" stroke="none" stroke-width="2" rx="0" /><rect x="2536.1" y="1779.94" width="4" height="4.14" fill="#fff" stroke="none" stroke-width="2" rx="0" /><rect x="2536.1" y="1788.22" width="4" height="4.14" fill="#fff" stroke="none" stroke-width="2" rx="0" /><rect x="2540.1" y="1775.8" width="4" height="4.14" fill="#fff" stroke="none" stroke-width="2" rx="0" /><rect x="2540.1" y="1784.08" width="4" height="4.14" fill="#fff" stroke="none" stroke-width="2" rx="0" /><rect x="2540.1" y="1792.36" width="4" height="4.14" fill="#fff" stroke="none" stroke-width="2" rx="0" /><rect x="2544.1" y="1779.94" width="4" height="4.14" fill="#fff" stroke="none" stroke-width="2" rx="0" /><rect x="2544.1" y="1788.22" width="4" height="4.14" fill="#fff" stroke="none" stroke-width="2" rx="0" /><rect x="2548.1" y="1775.8" width="4" height="4.14" fill="#fff" stroke="none" stroke-width="2" rx="0" /><rect x="2548.1" y="1784.08" width="4" height="4.14" fill="#fff" stroke="none" stroke-width="2" rx="0" /><rect x="2548.1" y="1792.36" width="4" height="4.14" fill="#fff" stroke="none" stroke-width="2" rx="0" /><path d="M2577 1771.500H2573V1796.500H2577" fill="none" stroke="#fff" stroke-width="2" /><path d="M2590.500 1771.500H2594.500V1783" fill="none" stroke="#fff" stroke-width="2" /><rect x="2579" y="1775" width="10" height="6.5" fill="#9db7dd" stroke="#fff" stroke-width="1.8" rx="0" /><circle cx="2584" cy="1789.5" r="4.8" fill="#9db7dd" stroke="#fff" stroke-width="1.8" /><path d="M2591.500 1784V1801.500L2595.500 1797.800 2598.500 1804 2601.500 1802.500 2598.500 1796.500H2604z" fill="#fff" stroke="#6a8dc0" stroke-width="0.8" /><path d="M2646 1797.400H2615.500L2638 1774.500" fill="none" stroke="#dcdcdc" stroke-width="2" /><rect x="2624.2" y="1782.6" width="6" height="6" fill="#dcdcdc" stroke="none" stroke-width="2" rx="0" /><path d="M2669 1775.400H2688.400V1800H2663.600V1781" fill="none" stroke="#dcdcdc" stroke-width="2" /><rect x="2659.4" y="1771.7" width="7.2" height="7.2" fill="none" stroke="#f0b080" stroke-width="1.8" rx="0" /><path d="M2707.200 1776V1797.400H2728" fill="none" stroke="#dcdcdc" stroke-width="2" /><path transform="translate(2707.2 1770.5) rotate(-90)" d="M0 0L-7 -4.0L-7 4.0z" fill="#dcdcdc"/><path transform="translate(2733.5 1797.4) rotate(0)" d="M0 0L-7 -4.0L-7 4.0z" fill="#dcdcdc"/><g transform="translate(2714.500 1775.500) scale(.85)"><path d="M11 0 0 8.500 6.500 9 3 15.500 15 6 8.500 6z" fill="#dcdcdc" stroke="none" stroke-width="2" /></g><path d="M2761.00 1770.50L2765.50 1781.70L2766.30 1783.60L2764.90 1785.20L2775.10 1801.60L2762.30 1794.00L2761.00 1793.10L2759.70 1794.00L2746.90 1801.60L2757.10 1785.20L2755.70 1783.60L2756.50 1781.70z" fill="#fff" stroke="none" stroke-width="2" /><circle cx="2773.5" cy="1778" r="4.2" fill="none" stroke="#fff" stroke-width="1.8" /><path d="M2803.50 1770.90L2808.00 1782.10L2808.80 1784.00L2807.40 1785.60L2817.60 1802.00L2804.80 1794.40L2803.50 1793.50L2802.20 1794.40L2789.40 1802.00L2799.60 1785.60L2798.20 1784.00L2799.00 1782.10z" fill="#dcdcdc" stroke="none" stroke-width="2" /><rect x="2807" y="1769" width="16" height="14" fill="#3a4250" stroke="none" stroke-width="2" rx="0" opacity="0"/><g transform="translate(2809.500 1770.500) scale(.88)"><path d="M11 0 0 8.500 6.500 9 3 15.500 15 6 8.500 6z" fill="#dcdcdc" stroke="#3a4250" stroke-width="0.8" /></g><path d="M2850.00 1770.90L2854.50 1782.10L2855.30 1784.00L2853.90 1785.60L2864.10 1802.00L2851.30 1794.40L2850.00 1793.50L2848.70 1794.40L2835.90 1802.00L2846.10 1785.60L2844.70 1784.00L2845.50 1782.10z" fill="#dcdcdc" stroke="none" stroke-width="2" /><path d="M2904.300 1782H2915.700L2910 1789z" fill="#c0c0c0" stroke="none" stroke-width="2" /><rect x="2935.6" y="1771.9" width="11.4" height="11.4" fill="none" stroke="#dcdcdc" stroke-width="2" rx="0" /><circle cx="2958.8" cy="1783.2" r="6" fill="none" stroke="#dcdcdc" stroke-width="2" /><path d="M2940.200 1800.200H2953.400L2946.800 1789.800z" fill="none" stroke="#dcdcdc" stroke-width="2" /><g transform="translate(2993.900 1786)"><g fill="#e2e2e2"><circle r="10.500"/><rect x="-3.700" y="-15" width="7.400" height="8" transform="rotate(0)"/><rect x="-3.700" y="-15" width="7.400" height="8" transform="rotate(45)"/><rect x="-3.700" y="-15" width="7.400" height="8" transform="rotate(90)"/><rect x="-3.700" y="-15" width="7.400" height="8" transform="rotate(135)"/><rect x="-3.700" y="-15" width="7.400" height="8" transform="rotate(180)"/><rect x="-3.700" y="-15" width="7.400" height="8" transform="rotate(225)"/><rect x="-3.700" y="-15" width="7.400" height="8" transform="rotate(270)"/><rect x="-3.700" y="-15" width="7.400" height="8" transform="rotate(315)"/></g><circle r="4.800" fill="#3a4250"/></g></svg><div class="abs" style="left:1460px;top:1583px;width:920px;height:131px;background:#3b4351;"></div><div class="abs" style="left:1380px;top:1712px;width:1000px;height:50px;background:#3b4351;"></div><span class="t" style="left:1470.0px;top:1596.4px;font-size:21px;color:#c9c9c9;letter-spacing:-0.074px;white-space:pre;">Autodesk DWG.  This file is a TrustedDWG last saved by an Autodesk application or Autodesk</span><span class="t" style="left:1470.0px;top:1626.4px;font-size:21px;color:#c9c9c9;letter-spacing:0.232px;">licensed application.</span><span class="t" style="left:1470.0px;top:1656.4px;font-size:21px;color:#c9c9c9;letter-spacing:-0.713px;">Command:</span><span class="t" style="left:1470.0px;top:1686.4px;font-size:21px;color:#c9c9c9;letter-spacing:-0.713px;">Command:</span><span class="t" style="left:1470.0px;top:1726.7px;font-size:22.5px;color:#9d9d9d;font-style:italic;letter-spacing:0.132px;">Type a command</span><div class="abs" style="left:2361px;top:1656px;width:8px;height:51px;background:#9a9ca2;border-radius:3px;"></div><svg style="left:0;top:0" width="3024" height="1964" viewBox="0 0 3024 1964"><path d="M1398 1728.500 1408 1733 1398 1737.500" fill="none" stroke="#c8c8c8" stroke-width="1.8" /><path d="M1411 1743.5L1424 1743.5" stroke="#c8c8c8" stroke-width="2" fill="none" /><path d="M1429 1731.500H1441L1435 1738z" fill="#c0c0c0" stroke="none" stroke-width="2" /><path d="M2298 1735H2310L2304 1742z" fill="#b0b0b0" stroke="none" stroke-width="2" /><path d="M2341 1733H2335.500V1754H2357.500V1733H2352" fill="none" stroke="#e8e8e8" stroke-width="2" /><path d="M2346.5 1728L2346.5 1745" stroke="#7dbdf5" stroke-width="2.4" fill="none" /><path d="M2341.500 1730 2346.500 1724 2351.500 1730z" fill="#7dbdf5" stroke="none" stroke-width="2" /></svg></div></div><svg style="left:0;top:0" width="3024" height="1964" viewBox="0 0 3024 1964"><defs>
<linearGradient id="dg" x1="0" x2="0" y1="0" y2="1"><stop offset="0" stop-color="#fff"/><stop offset="1" stop-color="#b9bdd0"/></linearGradient>
<linearGradient id="dgl" x1="0" x2="0" y1="0" y2="1"><stop offset="0" stop-color="#d8dae6"/><stop offset="1" stop-color="#b4b8cc"/></linearGradient>
<linearGradient id="dgd" x1="0" x2="1" y1="0" y2="0"><stop offset="0" stop-color="#37455f"/><stop offset=".12" stop-color="#364462"/><stop offset=".3" stop-color="#3f4b6c"/><stop offset=".42" stop-color="#333f58"/><stop offset=".5" stop-color="#2b3548"/><stop offset=".6" stop-color="#454c72"/><stop offset=".7" stop-color="#3a4464"/><stop offset=".8" stop-color="#28323f"/><stop offset=".9" stop-color="#364262"/><stop offset="1" stop-color="#3f4a6e"/></linearGradient>
<linearGradient id="trg" x1="0" x2="1" y1="0" y2="0"><stop offset="0" stop-color="#b9b9bd"/><stop offset=".5" stop-color="#dadade"/><stop offset="1" stop-color="#bcbcc0"/></linearGradient>
</defs><rect x="75" y="1820.500" width="2874" height="132.500" rx="44" fill="url(#dgd)" stroke="rgba(130,150,195,.55)" stroke-width="1.500"/><rect x="2254" y="1838.5" width="2" height="97" fill="#10123a" stroke="none" stroke-width="2" rx="0" /><rect x="2810" y="1838.5" width="2" height="97" fill="#10123a" stroke="none" stroke-width="2" rx="0" /><circle cx="140.8" cy="1942" r="4" fill="#000" stroke="none" stroke-width="2" /><circle cx="344.66" cy="1942" r="4" fill="#000" stroke="none" stroke-width="2" /><circle cx="2179.4" cy="1942" r="4" fill="#000" stroke="none" stroke-width="2" /><circle cx="2326.7" cy="1942" r="4" fill="#000" stroke="none" stroke-width="2" /><circle cx="2428.7" cy="1942" r="4" fill="#000" stroke="none" stroke-width="2" /><circle cx="2530.7" cy="1942" r="4" fill="#000" stroke="none" stroke-width="2" /><circle cx="2632.7" cy="1942" r="4" fill="#000" stroke="none" stroke-width="2" /><circle cx="2734.7" cy="1942" r="4" fill="#000" stroke="none" stroke-width="2" /><rect x="102.80000000000001" y="1849" width="76" height="76" rx="20" fill="rgba(150,165,205,.22)" stroke="rgba(255,255,255,.20)" stroke-width="1.200" /><path d="M144.8 1855H158.8a12 12 0 0 1 12 12V1907a12 12 0 0 1-12 12H150.8c-4 0-6-2-6-6 0-8 0-14-.5-20H135.8c1-16 3-28 9-38z" fill="url(#dg)" stroke="none" stroke-width="2" /><rect x="121.80000000000001" y="1872" width="2.6" height="7" fill="#fff" stroke="none" stroke-width="2" rx="1.3" /><rect x="154.8" y="1872" width="2.6" height="7" fill="#4a5674" stroke="none" stroke-width="2" rx="1.3" /><path d="M116.80000000000001 1899c10 10 32 12 45 1" fill="none" stroke="#e6e8f0" stroke-width="2.6" stroke-linecap="round"/><rect x="204.73000000000002" y="1849" width="76" height="76" rx="20" fill="rgba(150,165,205,.22)" stroke="rgba(255,255,255,.20)" stroke-width="1.200" /><rect x="216.73000000000002" y="1863" width="52" height="15" fill="rgba(215,220,235,.6)" stroke="none" stroke-width="2" rx="7.5" /><circle cx="224.23000000000002" cy="1870" r="3" fill="none" stroke="#fff" stroke-width="1.5" /><path d="M226.23000000000002 1872L228.23000000000002 1874" stroke="#fff" stroke-width="1.5" fill="none" /><rect x="218.73000000000002" y="1883" width="12" height="12" fill="rgba(235,238,248,0.55)" stroke="none" stroke-width="2" rx="3" /><rect x="236.73000000000002" y="1883" width="12" height="12" fill="rgba(235,238,248,0.55)" stroke="none" stroke-width="2" rx="3" /><rect x="254.73000000000002" y="1883" width="12" height="12" fill="rgba(235,238,248,1)" stroke="none" stroke-width="2" rx="3" /><rect x="218.73000000000002" y="1900" width="12" height="12" fill="rgba(235,238,248,0.7)" stroke="none" stroke-width="2" rx="3" /><rect x="236.73000000000002" y="1900" width="12" height="12" fill="rgba(235,238,248,0.75)" stroke="none" stroke-width="2" rx="3" /><rect x="254.73000000000002" y="1900" width="12" height="12" fill="rgba(235,238,248,0.45)" stroke="none" stroke-width="2" rx="3" /><rect x="306.66" y="1849" width="76" height="76" rx="20" fill="rgba(150,165,205,.22)" stroke="rgba(255,255,255,.20)" stroke-width="1.200" /><circle cx="344.66" cy="1887" r="30" fill="rgba(200,208,228,.55)" stroke="none" stroke-width="2" /><path d="M367.2 1887.0L372.7 1887.0M368.3 1891.2L372.2 1891.9M367.2 1895.2L371.0 1896.6M364.1 1898.2L368.9 1901.0M363.0 1902.4L366.1 1905.0M360.1 1905.4L362.7 1908.4M355.9 1906.5L358.7 1911.2M352.9 1909.6L354.2 1913.3M348.8 1910.6L349.5 1914.6M344.7 1909.5L344.7 1915.0M340.5 1910.6L339.8 1914.6M336.5 1909.6L335.1 1913.3M333.4 1906.5L330.7 1911.2M329.2 1905.4L326.7 1908.4M326.3 1902.4L323.2 1905.0M325.2 1898.2L320.4 1901.0M322.1 1895.2L318.3 1896.6M321.0 1891.2L317.1 1891.9M322.2 1887.0L316.7 1887.0M321.0 1882.8L317.1 1882.1M322.1 1878.8L318.3 1877.4M325.2 1875.8L320.4 1873.0M326.3 1871.6L323.2 1869.0M329.2 1868.6L326.7 1865.6M333.4 1867.5L330.7 1862.8M336.5 1864.4L335.1 1860.7M340.5 1863.4L339.8 1859.4M344.7 1864.5L344.7 1859.0M348.8 1863.4L349.5 1859.4M352.9 1864.4L354.2 1860.7M355.9 1867.5L358.7 1862.8M360.1 1868.6L362.7 1865.6M363.0 1871.6L366.1 1869.0M364.1 1875.8L368.9 1873.0M367.2 1878.8L371.0 1877.4M368.3 1882.8L372.2 1882.1" fill="none" stroke="rgba(255,255,255,.8)" stroke-width="1.6" /><path d="M365.66 1866L348.66 1891L340.66 1883z" fill="#fff" stroke="none" stroke-width="2" /><path d="M323.66 1908L348.66 1891L340.66 1883z" fill="rgba(215,220,235,.75)" stroke="none" stroke-width="2" /><rect x="408.59000000000003" y="1849" width="76" height="76" rx="20" fill="rgba(150,165,205,.22)" stroke="rgba(255,255,255,.20)" stroke-width="1.200" /><path d="M446.59000000000003 1865c16 0 28 8.500 28 19.500s-12 19.500-28 19.500c-4 0-8-.6-11-1.600-3 3-7 4.500-11.500 4.500 2.500-2.500 3.800-5.500 4-8.500C422.59000000000003 1895 418.59000000000003 1890 418.59000000000003 1884.5c0-11 12-19.500 28-19.500z" fill="url(#dg)" stroke="none" stroke-width="2" /><circle cx="476.59000000000003" cy="1858" r="18.3" fill="#fff" stroke="none" stroke-width="2" /><text x="469.59000000000003" y="1867" font-family="Liberation Sans" font-size="25" font-weight="normal" fill="#666" >6</text><rect x="510.52" y="1849" width="76" height="76" rx="20" fill="rgba(150,165,205,.22)" stroke="rgba(255,255,255,.20)" stroke-width="1.200" /><rect x="519.52" y="1868" width="58" height="38" fill="url(#dgl)" stroke="none" stroke-width="2" rx="4" /><path d="M520.52 1869L544.52 1890a6 6 0 0 0 8 0L576.52 1869" fill="none" stroke="#eef0f6" stroke-width="2" /><path d="M520.52 1905L541.52 1888M576.52 1905L555.52 1888" fill="none" stroke="#e2e5ee" stroke-width="1.6" /><path d="M521.52 1868H575.52L552.52 1889a6 6 0 0 1-8 0z" fill="rgba(255,255,255,.55)" stroke="none" stroke-width="2" /><clipPath id="mp"><rect x="612.45" y="1849" width="76" height="76" rx="20"/></clipPath><rect x="612.45" y="1849" width="76" height="76" rx="20" fill="rgba(150,160,200,.30)" stroke="rgba(255,255,255,.20)" stroke-width="1.200" /><g clip-path="url(#mp)"><rect x="628.45" y="1849" width="8" height="76" fill="rgba(220,225,240,.35)" stroke="none" stroke-width="2" rx="0" /><rect x="646.45" y="1849" width="6" height="76" fill="rgba(220,225,240,.25)" stroke="none" stroke-width="2" rx="0" /><path d="M612.45 1865L688.45 1917" fill="none" stroke="rgba(220,225,240,.3)" stroke-width="9" /><circle cx="688.45" cy="1849" r="24" fill="none" stroke="rgba(225,230,245,.5)" stroke-width="8" /></g><circle cx="639.45" cy="1895" r="19" fill="rgba(120,130,170,.5)" stroke="#fff" stroke-width="5" /><path d="M639.45 1881L648.95 1904L639.45 1898L629.95 1904z" fill="#fff" stroke="none" stroke-width="2" /><rect x="714.3800000000001" y="1849" width="76" height="76" rx="20" fill="rgba(150,165,205,.22)" stroke="rgba(255,255,255,.20)" stroke-width="1.200" /><ellipse cx="752.3800000000001" cy="1869" rx="9" ry="13" fill="rgba(235,238,248,.62)" transform="rotate(0 752.3800000000001 1887)"/><ellipse cx="752.3800000000001" cy="1869" rx="9" ry="13" fill="rgba(235,238,248,.62)" transform="rotate(45 752.3800000000001 1887)"/><ellipse cx="752.3800000000001" cy="1869" rx="9" ry="13" fill="rgba(235,238,248,.62)" transform="rotate(90 752.3800000000001 1887)"/><ellipse cx="752.3800000000001" cy="1869" rx="9" ry="13" fill="rgba(235,238,248,.62)" transform="rotate(135 752.3800000000001 1887)"/><ellipse cx="752.3800000000001" cy="1869" rx="9" ry="13" fill="rgba(235,238,248,.62)" transform="rotate(180 752.3800000000001 1887)"/><ellipse cx="752.3800000000001" cy="1869" rx="9" ry="13" fill="rgba(235,238,248,.62)" transform="rotate(225 752.3800000000001 1887)"/><ellipse cx="752.3800000000001" cy="1869" rx="9" ry="13" fill="rgba(235,238,248,.62)" transform="rotate(270 752.3800000000001 1887)"/><ellipse cx="752.3800000000001" cy="1869" rx="9" ry="13" fill="rgba(235,238,248,.62)" transform="rotate(315 752.3800000000001 1887)"/><circle cx="752.3800000000001" cy="1887" r="4" fill="#4a5674" stroke="none" stroke-width="2" /><rect x="816.31" y="1849" width="76" height="76" rx="20" fill="rgba(150,165,205,.22)" stroke="rgba(255,255,255,.20)" stroke-width="1.200" /><rect x="827.31" y="1868" width="39" height="37" fill="url(#dg)" stroke="none" stroke-width="2" rx="7" /><path d="M868.31 1883L879.31 1872c1.500-1.500 3-1 3 1V1901c0 2-1.500 2.500-3 1L868.31 1891z" fill="url(#dg)" stroke="none" stroke-width="2" /><rect x="918.24" y="1849" width="76" height="76" rx="20" fill="rgba(120,135,175,.22)" stroke="rgba(255,255,255,.20)" stroke-width="1.200" /><text x="943.24" y="1873" font-family="Liberation Sans" font-size="15" font-weight="bold" fill="rgba(225,228,240,.85)" >qui.</text><text x="931.24" y="1911" font-family="Liberation Sans" font-size="45" font-weight="normal" fill="#eceef5" textLength="49" lengthAdjust="spacingAndGlyphs">27</text><clipPath id="ct"><rect x="1020.1700000000001" y="1849" width="76" height="76" rx="20"/></clipPath><rect x="1020.1700000000001" y="1849" width="76" height="76" rx="20" fill="rgba(170,180,215,.32)" stroke="rgba(255,255,255,.20)" stroke-width="1.200" /><g clip-path="url(#ct)"><rect x="1086.17" y="1849" width="10" height="26" fill="#fff" stroke="none" stroke-width="2" rx="0" /><rect x="1086.17" y="1875" width="10" height="25" fill="rgba(225,228,240,.7)" stroke="none" stroke-width="2" rx="0" /><rect x="1086.17" y="1900" width="10" height="25" fill="rgba(200,205,225,.6)" stroke="none" stroke-width="2" rx="0" /></g><clipPath id="ct2"><circle cx="1053.17" cy="1887" r="24"/></clipPath><circle cx="1053.17" cy="1887" r="24" fill="rgba(215,220,238,.35)" stroke="rgba(255,255,255,.25)" stroke-width="1" /><circle cx="1053.17" cy="1880" r="10" fill="url(#dg)" stroke="none" stroke-width="2" /><g clip-path="url(#ct2)"><ellipse cx="1053.17" cy="1912" rx="20" ry="16" fill="rgba(235,238,248,.8)" stroke="none" stroke-width="2" /></g><rect x="1122.1000000000001" y="1849" width="76" height="76" rx="20" fill="rgba(150,165,205,.22)" stroke="rgba(255,255,255,.20)" stroke-width="1.200" /><circle cx="1137.1000000000001" cy="1868" r="6.5" fill="rgba(200,205,225,.35)" stroke="none" stroke-width="2" /><circle cx="1137.1000000000001" cy="1868" r="4.2" fill="#dfe2ee" stroke="none" stroke-width="2" /><path d="M1150.1000000000001 1868L1189.1000000000001 1868" stroke="#d4d8e6" stroke-width="2" fill="none" /><circle cx="1137.1000000000001" cy="1887" r="6.5" fill="rgba(200,205,225,.35)" stroke="none" stroke-width="2" /><circle cx="1137.1000000000001" cy="1887" r="4.2" fill="#dfe2ee" stroke="none" stroke-width="2" /><path d="M1150.1000000000001 1887L1189.1000000000001 1887" stroke="#d4d8e6" stroke-width="2" fill="none" /><circle cx="1137.1000000000001" cy="1906" r="6.5" fill="rgba(200,205,225,.35)" stroke="none" stroke-width="2" /><circle cx="1137.1000000000001" cy="1906" r="4.2" fill="#dfe2ee" stroke="none" stroke-width="2" /><path d="M1150.1000000000001 1906L1189.1000000000001 1906" stroke="#d4d8e6" stroke-width="2" fill="none" /><clipPath id="nt"><rect x="1224.03" y="1849" width="76" height="76" rx="20"/></clipPath><rect x="1224.03" y="1849" width="76" height="76" rx="20" fill="rgba(50,62,82,.85)" stroke="rgba(255,255,255,.20)" stroke-width="1.200" /><g clip-path="url(#nt)"><rect x="1224.03" y="1849" width="76" height="19" fill="url(#dg)" stroke="none" stroke-width="2" rx="0" /></g><path d="M1226.03 1870.5L1298.03 1870.5" stroke="rgba(255,255,255,.8)" stroke-width="1.6" fill="none" stroke-dasharray="1.600 3.200"/><path d="M1233.03 1887L1291.03 1887" stroke="#cdd1de" stroke-width="2" fill="none" /><path d="M1233.03 1906L1291.03 1906" stroke="#cdd1de" stroke-width="2" fill="none" /><rect x="1325.96" y="1849" width="76" height="76" rx="20" fill="rgba(120,135,170,.25)" stroke="rgba(255,255,255,.20)" stroke-width="1.200" /><circle cx="1355.96" cy="1894" r="22" fill="url(#dgl)" stroke="none" stroke-width="2" /><rect x="1350.96" y="1859" width="40" height="40" fill="rgba(225,228,240,.85)" stroke="none" stroke-width="2" rx="9" /><path d="M1340.96 1897c4-14 10-24 15-22s-1 20 4 21 8-16 13-15-1 14 4 13 8-8 13-12" fill="none" stroke="#5d6a86" stroke-width="3.6" stroke-linecap="round"/><rect x="1427.89" y="1849" width="76" height="76" rx="20" fill="rgba(140,150,200,.25)" stroke="rgba(255,255,255,.20)" stroke-width="1.200" /><g transform="translate(1435.89 1871) scale(.9)"><path fill="url(#dg)" d="M18.3 5.3c1.1-1.4 1.9-3.3 1.7-5.3-1.700.1-3.700 1.100-4.900 2.500-1.100 1.200-2 3.200-1.800 5.100 1.900.1 3.800-.9 5-2.300zM20 8.300c-2.700-.2-5 1.500-6.300 1.500s-3.300-1.400-5.400-1.400C5.500 8.500 2.900 10.100 1.500 12.600c-2.900 5-.7 12.400 2.100 16.500 1.400 2 3 4.200 5.200 4.100 2.100-.1 2.900-1.300 5.400-1.300s3.200 1.300 5.400 1.300c2.200 0 3.700-2 5-4 1.600-2.300 2.200-4.500 2.300-4.600-.1 0-4.400-1.700-4.400-6.600 0-4.100 3.400-6.100 3.500-6.200-1.900-2.800-4.900-3.400-6-3.500z"/></g><text x="1461.89" y="1899" font-family="Liberation Sans" font-size="38" font-weight="bold" fill="url(#dg)" textLength="32" lengthAdjust="spacingAndGlyphs">tv</text><rect x="1529.82" y="1849" width="76" height="76" rx="20" fill="rgba(140,150,200,.25)" stroke="rgba(255,255,255,.20)" stroke-width="1.200" /><path d="M1558.82 1867L1585.82 1860V1898a8.500 7 0 1 1-4-6V1875L1562.82 1879V1904a8.500 7 0 1 1-4-6z" fill="url(#dg)" stroke="none" stroke-width="2" /><rect x="1631.75" y="1849" width="76" height="76" rx="20" fill="url(#dgl)" stroke="rgba(255,255,255,.35)" stroke-width="1.200" /><path d="M1649.75 1859H1689.75L1693.75 1881H1645.75z" fill="#fff" stroke="none" stroke-width="2" /><rect x="1668.25" y="1881" width="3" height="30" fill="#f4f5fa" stroke="none" stroke-width="2" rx="0" /><rect x="1657.75" y="1910" width="24" height="3.5" fill="#f4f5fa" stroke="none" stroke-width="2" rx="1.5" /><circle cx="1669.75" cy="1868" r="6" fill="#b8bdd2" stroke="none" stroke-width="2" /><path d="M1651.75 1877.5L1687.75 1877.5" stroke="#c8ccdc" stroke-width="1.5" fill="none" /><rect x="1733.68" y="1849" width="76" height="76" rx="20" fill="url(#dgl)" stroke="rgba(255,255,255,.35)" stroke-width="1.200" /><rect x="1747.68" y="1899" width="9.5" height="14" fill="#fbfbfd" stroke="none" stroke-width="2" rx="2" /><rect x="1760.68" y="1885" width="9.5" height="28" fill="#fbfbfd" stroke="none" stroke-width="2" rx="2" /><rect x="1773.68" y="1860" width="9.5" height="53" fill="#fbfbfd" stroke="none" stroke-width="2" rx="2" /><rect x="1786.68" y="1874" width="9.5" height="39" fill="#fbfbfd" stroke="none" stroke-width="2" rx="2" /><rect x="1835.6100000000001" y="1849" width="76" height="76" rx="20" fill="url(#dgl)" stroke="rgba(255,255,255,.35)" stroke-width="1.200" /><path d="M1848.6100000000001 1911L1851.6100000000001 1904L1891.6100000000001 1863c3-2 7 1 5 5L1856.6100000000001 1908z" fill="#fdfdfe" stroke="none" stroke-width="2" /><path d="M1851.6100000000001 1913L1899.6100000000001 1913" stroke="#eceef4" stroke-width="2" fill="none" /><rect x="1937.5400000000002" y="1849" width="76" height="76" rx="20" fill="rgba(120,135,175,.22)" stroke="rgba(255,255,255,.20)" stroke-width="1.200" /><path d="M1980.5400000000002 1865L1956.5400000000002 1906M1970.5400000000002 1865L1994.5400000000002 1906" fill="none" stroke="rgba(235,238,248,.9)" stroke-width="7" stroke-linecap="round"/><path d="M1950.5400000000002 1896H2000.5400000000002" fill="none" stroke="rgba(225,228,242,.8)" stroke-width="6.5" stroke-linecap="round"/><rect x="2039.4700000000003" y="1849" width="76" height="76" rx="20" fill="rgba(120,135,165,.25)" stroke="rgba(255,255,255,.20)" stroke-width="1.200" /><circle cx="2077.4700000000003" cy="1887" r="25" fill="none" stroke="#dfe1ea" stroke-width="6" /><rect x="2075.7700000000004" y="1855.5" width="3.400" height="5" fill="#dfe1ea" transform="rotate(0 2077.4700000000003 1887)"/><rect x="2075.7700000000004" y="1855.5" width="3.400" height="5" fill="#dfe1ea" transform="rotate(12 2077.4700000000003 1887)"/><rect x="2075.7700000000004" y="1855.5" width="3.400" height="5" fill="#dfe1ea" transform="rotate(24 2077.4700000000003 1887)"/><rect x="2075.7700000000004" y="1855.5" width="3.400" height="5" fill="#dfe1ea" transform="rotate(36 2077.4700000000003 1887)"/><rect x="2075.7700000000004" y="1855.5" width="3.400" height="5" fill="#dfe1ea" transform="rotate(48 2077.4700000000003 1887)"/><rect x="2075.7700000000004" y="1855.5" width="3.400" height="5" fill="#dfe1ea" transform="rotate(60 2077.4700000000003 1887)"/><rect x="2075.7700000000004" y="1855.5" width="3.400" height="5" fill="#dfe1ea" transform="rotate(72 2077.4700000000003 1887)"/><rect x="2075.7700000000004" y="1855.5" width="3.400" height="5" fill="#dfe1ea" transform="rotate(84 2077.4700000000003 1887)"/><rect x="2075.7700000000004" y="1855.5" width="3.400" height="5" fill="#dfe1ea" transform="rotate(96 2077.4700000000003 1887)"/><rect x="2075.7700000000004" y="1855.5" width="3.400" height="5" fill="#dfe1ea" transform="rotate(108 2077.4700000000003 1887)"/><rect x="2075.7700000000004" y="1855.5" width="3.400" height="5" fill="#dfe1ea" transform="rotate(120 2077.4700000000003 1887)"/><rect x="2075.7700000000004" y="1855.5" width="3.400" height="5" fill="#dfe1ea" transform="rotate(132 2077.4700000000003 1887)"/><rect x="2075.7700000000004" y="1855.5" width="3.400" height="5" fill="#dfe1ea" transform="rotate(144 2077.4700000000003 1887)"/><rect x="2075.7700000000004" y="1855.5" width="3.400" height="5" fill="#dfe1ea" transform="rotate(156 2077.4700000000003 1887)"/><rect x="2075.7700000000004" y="1855.5" width="3.400" height="5" fill="#dfe1ea" transform="rotate(168 2077.4700000000003 1887)"/><rect x="2075.7700000000004" y="1855.5" width="3.400" height="5" fill="#dfe1ea" transform="rotate(180 2077.4700000000003 1887)"/><rect x="2075.7700000000004" y="1855.5" width="3.400" height="5" fill="#dfe1ea" transform="rotate(192 2077.4700000000003 1887)"/><rect x="2075.7700000000004" y="1855.5" width="3.400" height="5" fill="#dfe1ea" transform="rotate(204 2077.4700000000003 1887)"/><rect x="2075.7700000000004" y="1855.5" width="3.400" height="5" fill="#dfe1ea" transform="rotate(216 2077.4700000000003 1887)"/><rect x="2075.7700000000004" y="1855.5" width="3.400" height="5" fill="#dfe1ea" transform="rotate(228 2077.4700000000003 1887)"/><rect x="2075.7700000000004" y="1855.5" width="3.400" height="5" fill="#dfe1ea" transform="rotate(240 2077.4700000000003 1887)"/><rect x="2075.7700000000004" y="1855.5" width="3.400" height="5" fill="#dfe1ea" transform="rotate(252 2077.4700000000003 1887)"/><rect x="2075.7700000000004" y="1855.5" width="3.400" height="5" fill="#dfe1ea" transform="rotate(264 2077.4700000000003 1887)"/><rect x="2075.7700000000004" y="1855.5" width="3.400" height="5" fill="#dfe1ea" transform="rotate(276 2077.4700000000003 1887)"/><rect x="2075.7700000000004" y="1855.5" width="3.400" height="5" fill="#dfe1ea" transform="rotate(288 2077.4700000000003 1887)"/><rect x="2075.7700000000004" y="1855.5" width="3.400" height="5" fill="#dfe1ea" transform="rotate(300 2077.4700000000003 1887)"/><rect x="2075.7700000000004" y="1855.5" width="3.400" height="5" fill="#dfe1ea" transform="rotate(312 2077.4700000000003 1887)"/><rect x="2075.7700000000004" y="1855.5" width="3.400" height="5" fill="#dfe1ea" transform="rotate(324 2077.4700000000003 1887)"/><rect x="2075.7700000000004" y="1855.5" width="3.400" height="5" fill="#dfe1ea" transform="rotate(336 2077.4700000000003 1887)"/><rect x="2075.7700000000004" y="1855.5" width="3.400" height="5" fill="#dfe1ea" transform="rotate(348 2077.4700000000003 1887)"/><circle cx="2077.4700000000003" cy="1887" r="17.5" fill="none" stroke="rgba(160,168,190,.8)" stroke-width="4" stroke-dasharray="2.500 2"/><path d="M2077.4700000000003 1887L2077.5 1910.0" stroke="#dfe1ea" stroke-width="4.5" fill="none" /><path d="M2077.4700000000003 1887L2057.6 1875.5" stroke="#dfe1ea" stroke-width="4.5" fill="none" /><path d="M2077.4700000000003 1887L2097.4 1875.5" stroke="#dfe1ea" stroke-width="4.5" fill="none" /><circle cx="2077.4700000000003" cy="1887" r="4.5" fill="#dfe1ea" stroke="none" stroke-width="2" /><circle cx="2103.9700000000003" cy="1857.5" r="18" fill="#fff" stroke="none" stroke-width="2" /><text x="2097.4700000000003" y="1866" font-family="Liberation Sans" font-size="24" font-weight="normal" fill="#707070" >1</text><rect x="2141.4" y="1849" width="76" height="76" rx="20" fill="#fff" stroke="#fff" stroke-width="1.200" /><path d="M2151.4 1867L2159.4 1856H2201.4V1865H2207.4V1895L2151.4 1904z" fill="#6c7490" stroke="none" stroke-width="2" /><path d="M2151.4 1867L2159.4 1856V1896L2151.4 1904z" fill="#8a92ab" stroke="none" stroke-width="2" /><path d="M2159.4 1856H2201.4V1892L2159.4 1896z" fill="#6a7384" stroke="none" stroke-width="2" /><rect x="2155.4" y="1896" width="52" height="22" fill="#5f6787" stroke="none" stroke-width="2" rx="0" /><path d="M2155.4 1896L2207.4 1888V1896z" fill="#78809c" stroke="none" stroke-width="2" /><text x="2168.4" y="1888" font-family="Liberation Sans" font-size="33" font-weight="bold" fill="#fff" >A</text><text x="2166.4" y="1914" font-family="Liberation Sans" font-size="13" font-weight="bold" fill="#fff" textLength="27" lengthAdjust="spacingAndGlyphs">CAD</text><clipPath id="tb"><rect x="2288.7" y="1849" width="76" height="76" rx="20"/></clipPath><rect x="2288.7" y="1849" width="76" height="76" rx="20" fill="rgba(130,140,190,.28)" stroke="rgba(255,255,255,.3)" stroke-width="1.200" /><g clip-path="url(#tb)"><path d="M2307.7 1849L2307.7 1925" stroke="rgba(235,238,248,.85)" stroke-width="2" fill="none" /><path d="M2288.7 1868L2364.7 1868" stroke="rgba(225,228,242,.6)" stroke-width="1.8" fill="none" /><path d="M2288.7 1887L2364.7 1887" stroke="rgba(225,228,242,.6)" stroke-width="1.8" fill="none" /><path d="M2288.7 1906L2364.7 1906" stroke="rgba(225,228,242,.6)" stroke-width="1.8" fill="none" /></g><rect x="2390.7" y="1849" width="76" height="76" rx="20" fill="#38454f" stroke="rgba(255,255,255,.2)" stroke-width="1.200" /><path d="M2404.7 1866L2417.7 1873L2404.7 1880" fill="none" stroke="#f0f0f0" stroke-width="2.6" /><path d="M2421.7 1887L2437.7 1887" stroke="#a9b0b8" stroke-width="2.6" fill="none" /><rect x="2492.7" y="1849" width="76" height="76" rx="20" fill="#fbfbfc" stroke="#fff" stroke-width="1.200" /><circle cx="2530.7" cy="1887" r="32" fill="#a7adbf" stroke="none" stroke-width="2" /><path d="M2511.7 1889L2547.7 1874L2541.7 1903L2531.7 1895L2526.7 1900L2525.7 1892z" fill="#fff" stroke="none" stroke-width="2" /><rect x="2594.7" y="1849" width="76" height="76" rx="20" fill="#8e8e8e" stroke="rgba(255,255,255,.25)" stroke-width="1.200" /><circle cx="2632.7" cy="1887" r="30.5" fill="#c9c9c9" stroke="none" stroke-width="2" /><path d="M2632.7 1887L2606.2999999999997 1871.8A30.500 30.500 0 0 1 2659.1 1871.8z" fill="#f4f4f4" stroke="none" stroke-width="2" /><path d="M2632.7 1887L2659.1 1871.8A30.500 30.500 0 0 1 2632.7 1917.5z" fill="#dedede" stroke="none" stroke-width="2" /><circle cx="2632.7" cy="1887" r="14" fill="#9a9a9a" stroke="none" stroke-width="2" /><circle cx="2632.7" cy="1887" r="11" fill="#dcdcdc" stroke="none" stroke-width="2" /><linearGradient id="sbg" x1="0" x2="0" y1="0" y2="1"><stop offset="0" stop-color="#858cab"/><stop offset="1" stop-color="#6e7893"/></linearGradient><rect x="2696.7" y="1849" width="76" height="76" rx="20" fill="url(#sbg)" stroke="rgba(255,255,255,.25)" stroke-width="1.200" /><path d="M2714.1 1873.4L2755.4 1860.2L2755.4 1874.8L2739.8 1880.7L2755.4 1886.6L2755.4 1900.5L2714.1 1913.4L2714.1 1899.2L2728.8 1895.0L2714.1 1887.7z" fill="#c3c6db" stroke="none" stroke-width="2" /><path d="M2714.1 1887.7L2728.7999999999997 1895L2755.3999999999996 1886.6L2739.7999999999997 1880.7z" fill="#b9bdd4" stroke="none" stroke-width="2" /><path d="M2848.9 1852H2917.2999999999997L2909.6 1919c-.5 4-3 6.700-7 6.700H2863.6c-4 0-6.500-2.700-7-6.700z" fill="url(#trg)" stroke="none" stroke-width="2" opacity=".93"/><path d="M2855.1 1853l6-5 8 2 5-3.500 11 0 7 4 8-3 4 5.500z" fill="#c4c4c4" stroke="none" stroke-width="2" /><path d="M2863.1 1849l9 4M2875.1 1846.5l6 6M2891.1 1847l-3 6 12 1" fill="none" stroke="#8a8a8a" stroke-width="1.6" /><ellipse cx="2883.1" cy="1853" rx="34.2" ry="5.5" fill="none" stroke="#ececec" stroke-width="2.2" /><path d="M2848.9 1853a34.200 5.500 0 0 0 68.400 0" fill="none" stroke="#f4f4f4" stroke-width="2.4" /></svg></div></body></html>
